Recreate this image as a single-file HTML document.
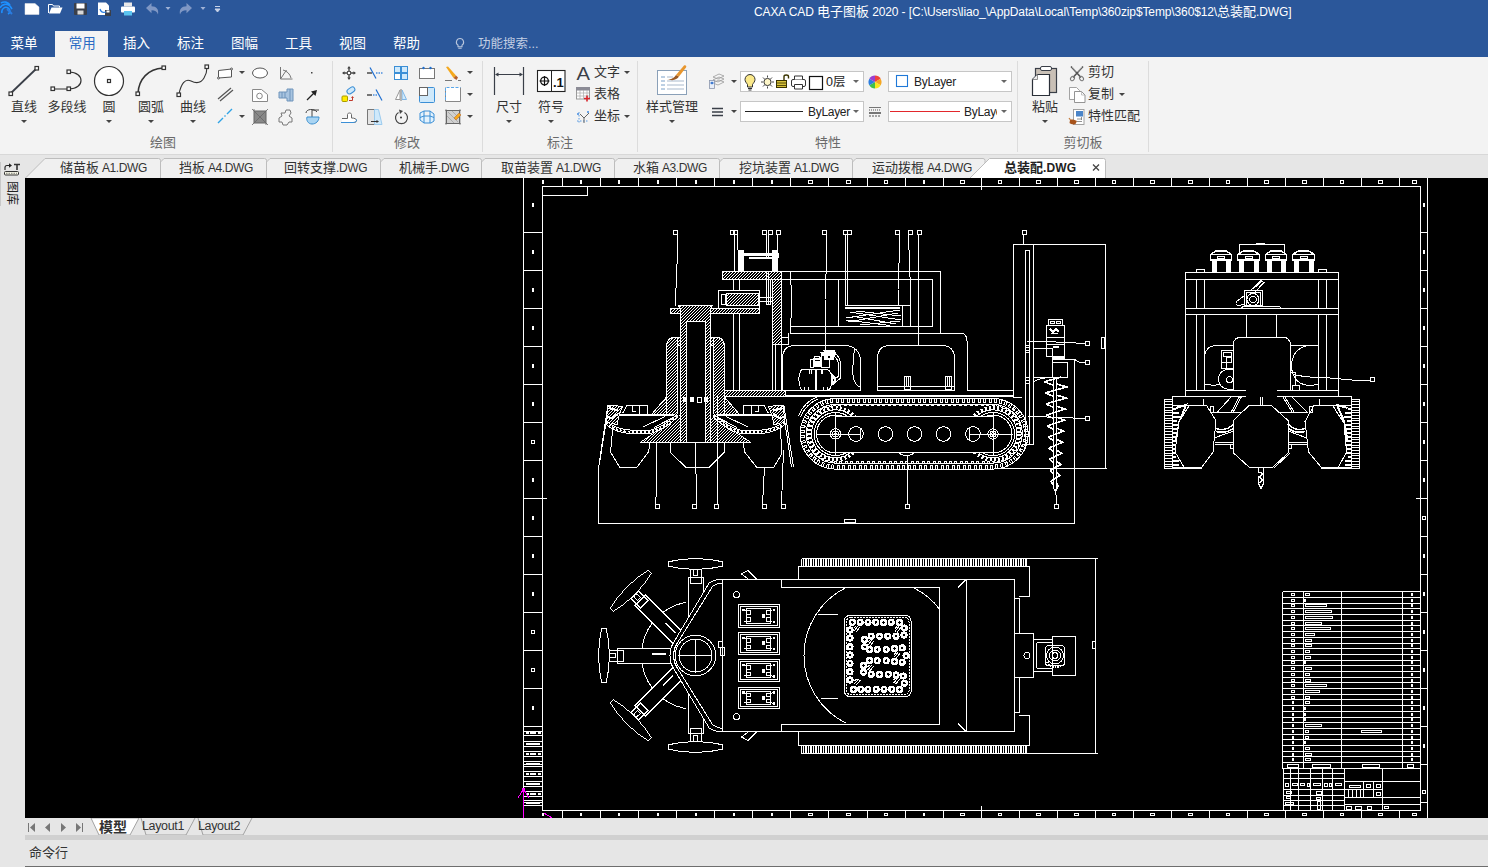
<!DOCTYPE html>
<html lang="zh"><head><meta charset="utf-8"><title>CAXA CAD</title>
<style>
*{box-sizing:border-box;margin:0;padding:0}
html,body{width:1488px;height:867px;overflow:hidden;background:#e6e6e6}
body{font-family:"Liberation Sans","Noto Sans CJK SC",sans-serif;font-size:13px;color:#333;position:relative}
.abs{position:absolute}
#title{left:0;top:0;width:1488px;height:57px;background:#2b579a}
#title .cap{position:absolute;left:754px;top:1px;color:#fff;font-size:12px;white-space:nowrap;letter-spacing:-0.12px}
.cj{font-size:13px;letter-spacing:0}
.rt{position:absolute;top:31px;height:26px;line-height:26px;color:#fff;font-size:13.5px;text-align:center;white-space:nowrap}
.rt.on{background:#f3f3f3;color:#2b6cc4}
#ribbon{left:0;top:57px;width:1488px;height:98px;background:#f3f3f3;border-bottom:1px solid #d8d8d8}
.sep{position:absolute;top:61px;width:1px;height:91px;background:#dcdcdc}
.gl{position:absolute;top:132px;font-size:13px;color:#6a6a6a;white-space:nowrap;transform:translateX(-50%)}
.bl{position:absolute;top:96px;font-size:13px;color:#333;white-space:nowrap;transform:translateX(-50%)}
.sl{position:absolute;font-size:13px;color:#333;white-space:nowrap}
.dd{position:absolute;width:0;height:0;border-left:3px solid transparent;border-right:3px solid transparent;border-top:3px solid #444}
#doctabs{left:0;top:156px;width:1488px;height:22px;background:#e6e6e6}
.dt{position:absolute;top:157.5px;font-size:12px;letter-spacing:-0.4px;color:#333;white-space:nowrap;line-height:19px}
#side{left:0;top:156px;width:25px;height:711px;background:#e6e6e6}
#canvas{left:25px;top:178px;width:1463px;height:640px;background:#000}
#bottom{left:25px;top:818px;width:1463px;height:49px;background:#e6e6e6}
.combo{position:absolute;height:21px;background:#fff;border:1px solid #c6c6c6}
</style></head><body>
<div id="title" class="abs"><div class="cap">CAXA CAD <span class="cj">电子图板</span> 2020 - [C:\Users\liao_\AppData\Local\Temp\360zip$Temp\360$12\<span class="cj">总装配</span>.DWG]</div></div>
<div class="rt" style="left:-3px;width:54px">菜单</div>
<div class="rt on" style="left:55px;width:53px;text-indent:1.5px">常用</div>
<div class="rt" style="left:109.5px;width:54px">插入</div>
<div class="rt" style="left:163.5px;width:54px">标注</div>
<div class="rt" style="left:217.5px;width:54px">图幅</div>
<div class="rt" style="left:271.5px;width:54px">工具</div>
<div class="rt" style="left:325.5px;width:54px">视图</div>
<div class="rt" style="left:379.5px;width:54px">帮助</div>
<svg class="abs" style="left:453px;top:36px" width="14" height="16" viewBox="0 0 14 16"><path d="M7 2.5a3.6 3.6 0 0 0-2 6.6v1.6h4V9.1a3.6 3.6 0 0 0-2-6.6z M5.3 12.3h3.4" fill="none" stroke="#b9c6dd" stroke-width="1.1"/></svg>
<div class="abs" style="left:478px;top:33px;font-size:12.5px;color:#c3cfe3;white-space:nowrap">功能搜索...</div>
<!--RIBBONTABS-->
<div id="ribbon" class="abs"></div>
<div class="sep" style="left:332px"></div><div class="sep" style="left:482px"></div><div class="sep" style="left:637px"></div><div class="sep" style="left:1017px"></div><div class="sep" style="left:1148px"></div>
<div class="bl" style="left:24px">直线</div><div class="bl" style="left:67px">多段线</div><div class="bl" style="left:109px">圆</div><div class="bl" style="left:151px">圆弧</div><div class="bl" style="left:193px">曲线</div>
<div class="bl" style="left:509px">尺寸</div><div class="bl" style="left:551px">符号</div><div class="bl" style="left:672px">样式管理</div><div class="bl" style="left:1045px">粘贴</div>
<div class="gl" style="left:163px">绘图</div><div class="gl" style="left:407px">修改</div><div class="gl" style="left:560px">标注</div><div class="gl" style="left:828px">特性</div><div class="gl" style="left:1083px">剪切板</div>
<div class="sl" style="left:594px;top:61px">文字</div><div class="sl" style="left:594px;top:83px">表格</div><div class="sl" style="left:594px;top:105px">坐标</div>
<div class="sl" style="left:1088px;top:61px">剪切</div><div class="sl" style="left:1088px;top:83px">复制</div><div class="sl" style="left:1088px;top:105px">特性匹配</div>
<div class="dd" style="left:21px;top:120px"></div><div class="dd" style="left:106px;top:120px"></div><div class="dd" style="left:148px;top:120px"></div><div class="dd" style="left:190px;top:120px"></div>
<div class="dd" style="left:506px;top:120px"></div><div class="dd" style="left:548px;top:120px"></div><div class="dd" style="left:669px;top:120px"></div><div class="dd" style="left:1042px;top:120px"></div>
<div class="dd" style="left:239px;top:71px"></div><div class="dd" style="left:239px;top:115px"></div>
<div class="dd" style="left:467px;top:71px"></div><div class="dd" style="left:467px;top:93px"></div><div class="dd" style="left:467px;top:115px"></div>
<div class="dd" style="left:624px;top:71px"></div><div class="dd" style="left:624px;top:115px"></div>
<div class="dd" style="left:731px;top:80px"></div><div class="dd" style="left:731px;top:110px"></div>
<div class="dd" style="left:1119px;top:93px"></div>
<div class="combo" style="left:740px;top:71px;width:124px"></div>
<div class="combo" style="left:888px;top:71px;width:124px"></div>
<div class="combo" style="left:740px;top:101px;width:124px"></div>
<div class="combo" style="left:888px;top:101px;width:124px"></div>
<div class="sl" style="left:826px;top:71px;font-size:12.5px;color:#222">0层</div>
<div class="sl" style="left:914px;top:75px;font-size:12px;letter-spacing:-0.3px;color:#222">ByLayer</div>
<div class="sl" style="left:808px;top:104.5px;font-size:12px;letter-spacing:-0.3px;color:#222">ByLayer</div>
<div class="sl" style="left:964px;top:104.5px;font-size:12px;letter-spacing:-0.3px;color:#222;width:33px;overflow:hidden">ByLayer</div>
<div class="dd" style="left:853px;top:80px;border-top-color:#666"></div><div class="dd" style="left:1001px;top:80px;border-top-color:#666"></div>
<div class="dd" style="left:853px;top:110px;border-top-color:#666"></div><div class="dd" style="left:1001px;top:110px;border-top-color:#666"></div>
<svg class="abs" style="left:0;top:0" width="1488" height="157" viewBox="0 0 1488 157" fill="none" stroke-linecap="butt">
<!-- quick access -->
<g>
<path d="M1 3c3-2 7-1 9 2M0 8c2-4 7-5 10-2l2 3M2 13c-1-4 3-7 6-5s2 5 0 6" stroke="#1e90ff" stroke-width="1.6"/>
<path d="M7 9l5 5" stroke="#2a7de1" stroke-width="2"/>
<path d="M25 3.5h10l4 3.5v7.5h-14z" fill="#fff" stroke="#e6e6e6" stroke-width="0.5"/>
<path d="M49 13.5l2.5-6h11l-2.5 6z" fill="#fff"/><path d="M48.500 13V4.500h4l1 1.500h6v1.500" stroke="#fff" stroke-width="1"/>
<rect x="74" y="3" width="13" height="12" rx="1" fill="#3a3f4a"/><rect x="76.500" y="3.500" width="8" height="5" fill="#fff"/><rect x="77.500" y="10.500" width="6" height="4" fill="#d8d8d8"/>
<path d="M98 2.500h8l3 3V15h-11z" fill="#fff"/><rect x="105" y="10" width="6" height="6" fill="#3a3f4a"/><rect x="106.500" y="10.500" width="3" height="2" fill="#fff"/><path d="M100 9c1 3 3 4 6 3" stroke="#2a7de1" stroke-width="1.300"/>
<rect x="121" y="6.500" width="14" height="6" rx="1" fill="#fff"/><rect x="124" y="2.500" width="8" height="4" fill="#e8e8e8"/><rect x="124" y="11" width="8" height="4.500" fill="#5bc4f0"/>
<path d="M146 8l5.500-5v3.200c5 0 7.500 3 6.500 8.300c-1-3-3-4.300-6.500-4.300v3z" fill="#7f97c4"/>
<path d="M192 8l-5.500-5v3.200c-5 0-7.500 3-6.500 8.300c1-3 3-4.300 6.500-4.300v3z" fill="#7f97c4"/>
<path d="M165.500 7h5l-2.500 3zM200.500 7h5l-2.500 3z" fill="#9fb2d6"/>
<path d="M215 6.500h5M215 9h5l-2.500 3z" stroke="#c8d3e8" stroke-width="1" fill="#c8d3e8"/>
</g>
<!-- big draw icons -->
<g stroke="#333" stroke-width="1.200">
<path d="M11 93L36 69" stroke-width="1.800" stroke="#3a3f48"/>
<rect x="9" y="92" width="3.500" height="3.500" fill="#fff"/><rect x="35" y="66.500" width="3.500" height="3.500" fill="#fff"/>
<path d="M53 89h16M69 72c16 0 16 17 0 17"/>
<rect x="51" y="87" width="3.500" height="3.500" fill="#fff"/><rect x="67" y="87" width="3.500" height="3.500" fill="#fff"/><rect x="67" y="70" width="3.500" height="3.500" fill="#fff"/>
<circle cx="109" cy="81" r="14.500" fill="#fff"/><rect x="107.500" y="79.500" width="3" height="3" fill="#fff"/>
<path d="M138 93c1-14 10-24 25-25" stroke-width="1.500"/>
<rect x="136" y="92" width="3.500" height="3.500" fill="#fff"/><rect x="162" y="66" width="3.500" height="3.500" fill="#fff"/>
<path d="M179 94c2-10 6-16 12-13s10 2 13-3s3-8 3-11" stroke-width="1.100"/>
<rect x="177" y="93" width="3.500" height="3.500" fill="#fff"/><rect x="205" y="65" width="3.500" height="3.500" fill="#fff"/>
</g>
<!-- small draw icons -->
<g stroke="#555" stroke-width="1">
<path d="M218.500 70.500l13-1.500v8l-13 1z" fill="#fff"/><circle cx="218.500" cy="78" r="1" fill="#fff"/><circle cx="231.500" cy="69" r="1" fill="#fff"/>
<path d="M218 99l13-11M220 101l13-11" stroke="#555" stroke-width="1.200"/>
<path d="M218 123l5-5m1.500-1.500l1-1m1.500-1.500l5-5" stroke="#2ea3e6" stroke-width="1.400"/>
<ellipse cx="260" cy="73" rx="7.500" ry="5" fill="#fff"/>
<path d="M252.500 89.500h9l6 5v7h-15z" fill="#fff" stroke="#888"/><circle cx="259.500" cy="96" r="2.800" stroke="#888"/>
<rect x="254" y="111" width="12" height="12" fill="#888" stroke="#666"/><path d="M252 109l16 16M268 109l-16 16M254 111v-2M266 123v2" stroke="#666" stroke-width="0.800"/>
<path d="M280.500 67v12h12M280.500 79l6-9M283 70c4 1 7 4 8 8" stroke="#777"/>
<path d="M279 92h8v-3h6v12h-6v-3h-8z" fill="#a8c4e0" stroke="#6f94bb"/><path d="M282 92v6M285 92v6M290 89v12" stroke="#6f94bb"/>
<path d="M281 113h4l1-3h4l1 3-2 3 3 2v4h-3l-2 3h-4l-1-3h-3v-4l3-2z" stroke="#777" fill="#f3f3f3"/>
<rect x="311" y="72" width="1.500" height="1.500" fill="#444" stroke="none"/>
<path d="M307 100l8-8" stroke="#222" stroke-width="1.200"/><path d="M317 90l-1.500 6-4.500-4.500z" fill="#222" stroke="none"/>
<path d="M306 113c0-4 8-5 11-1M312 117v-7h7" stroke="#444"/><path d="M312 117h7c0 4-3 7-7 7s-6-4-5-7z" fill="#a9d4f2" stroke="#3b8fcf"/>
</g>
</svg>
<svg class="abs" style="left:0;top:0" width="1488" height="157" viewBox="0 0 1488 157" fill="none">
<!-- modify group -->
<g stroke-width="1">
<rect x="347.500" y="71.500" width="3" height="3" fill="#fff" stroke="#555"/><path d="M343 73h4M351 73h4M349 67v4M349 75v4" stroke="#444" stroke-width="1.400"/><path d="M342 73l2.500-1.800v3.600zM356 73l-2.500-1.800v3.600zM349 66l-1.800 2.500h3.600zM349 80l-1.800-2.500h3.600z" fill="#444"/>
<path d="M367 73h5" stroke="#555" stroke-width="1.600"/><path d="M376 73h7" stroke="#4b8fe0" stroke-width="1.400" stroke-dasharray="1.500 1"/><path d="M370 67.500l6 11" stroke="#1f6fd0" stroke-width="1.200"/>
<rect x="394.500" y="66.500" width="6" height="6" fill="#cfe9fb" stroke="#3b8fd6"/><rect x="401.500" y="66.500" width="6" height="6" fill="#cfe9fb" stroke="#3b8fd6"/><rect x="394.500" y="73.500" width="6" height="6" fill="#fff" stroke="#3b8fd6"/><rect x="401.500" y="73.500" width="6" height="6" fill="#cfe9fb" stroke="#3b8fd6"/>
<path d="M422 68.500h-2.500v10h15v-10h-2M425 68.500h4" stroke="#777" fill="#fff"/><rect x="419.500" y="68.500" width="15" height="10" fill="#fff" stroke="#777"/><circle cx="423.500" cy="68" r="1.200" fill="#1f6fd0"/><circle cx="430.500" cy="68" r="1.200" fill="#1f6fd0"/>
<path d="M446 67l2-0.500 8 9-2.500 2.500z" fill="#f5a81c"/><path d="M453.500 78l2.500-2.500 2 2-1.500 2.500z" fill="#b5602a"/><path d="M445 80.500h7M458 80.500h3" stroke="#777"/>
<rect x="342" y="96" width="5.500" height="5.500" rx="1" fill="#ffeb00" stroke="#a89a00"/><rect x="347" y="88" width="8.500" height="5" rx="2.500" transform="rotate(-35 351 91)" fill="#cfe9fb" stroke="#3b8fd6"/><path d="M349 100.500h3.500v-3" stroke="#c0392b"/><path d="M352.500 96l-1.500 2h3z" fill="#c0392b"/>
<path d="M367 95h5" stroke="#555" stroke-width="1.600"/><path d="M373 95h4" stroke="#4b8fe0" stroke-width="1.400" stroke-dasharray="1.500 1"/><path d="M376 89.500l6 11" stroke="#1f6fd0" stroke-width="1.200"/>
<path d="M400 90l-4.500 9.500h4.500z" fill="#fff" stroke="#999"/><path d="M402 90l4.500 9.500h-4.500z" fill="#cfe9fb" stroke="#7fb6e6"/><path d="M401 89v12" stroke="#aaa" stroke-width="1.600"/>
<rect x="419.500" y="87.500" width="15" height="15" rx="1" fill="#cfe9fb" stroke="#3b8fd6"/><rect x="419.500" y="87.500" width="8" height="8" fill="#fff" stroke="#666"/>
<path d="M445.500 87.500v14h15v-14" stroke="#888" fill="#fff"/><path d="M445.500 100v-12.500h15" stroke="#5aa7ea" stroke-dasharray="3 1.500"/>
<path d="M342 118.500h5.500v-4c0-2 4-2 4 0v3.500c3 0 5 1 5 2.500s-1.500 2-3 2H342" stroke="#666" fill="#fff"/><path d="M341 122.500h12c2 0 4-1 3.500-3" stroke="#3b8fd6"/>
<path d="M367.500 109.500h7v15h-7z" fill="#e4e4e4" stroke="#777"/><path d="M374.500 109.500h4l3.500 15h-7.500z" fill="#cfe9fb" stroke="#9ccbee"/><path d="M371 121.500h6" stroke="#333"/><path d="M379 121.500l-2.500-1.500v3z" fill="#333"/>
<path d="M404.500 112.500a6 6 0 1 1-6 0" stroke="#444" stroke-width="1.200"/><path d="M399 109.500l4 1.500-3 3z" fill="#444"/><circle cx="401" cy="117.500" r="1" fill="#333"/>
<path d="M420 113l4-2h6l4 3v7l-3 2h-7l-4-3z M424 111v5h6v-5M424 116l-4 1.500M430 116l4 1.500M424 116v7M430 116v7" stroke="#3b8fd6" fill="#e3f2fd"/>
<rect x="446.500" y="110.500" width="13" height="13" fill="#d0d0d0" stroke="#666"/><path d="M446 109v16M460 109v16M445 110.500h16M445 123.500h16" stroke="#666" stroke-width="0.600"/><path d="M448 112l10 10M452 111l7 7M447 116l7 7" stroke="#999" stroke-width="0.700"/><path d="M454 118l5-5 2 2-5 5z" fill="#f5a81c" stroke="#b5602a" stroke-width="0.500"/>
</g>
</svg>
<svg class="abs" style="left:0;top:0" width="1488" height="157" viewBox="0 0 1488 157" fill="none">
<!-- annotate -->
<path d="M494.500 67v28M523.500 67v28M496 74.500h26" stroke="#3a3f48" stroke-width="1.200"/><path d="M495 74.500l3.500-2v4zM523 74.500l-3.500-2v4z" fill="#3a3f48"/>
<rect x="537.500" y="70.500" width="27.500" height="21" fill="#fff" stroke="#222" stroke-width="1.100"/><path d="M551.500 70.500v21" stroke="#222"/><circle cx="544.500" cy="81" r="3.800" stroke="#111" stroke-width="1.300"/><path d="M539.500 81h10M544.500 76v10" stroke="#111" stroke-width="1.200"/>
<text x="553" y="86.500" font-family="Liberation Sans,sans-serif" font-weight="bold" font-size="13" fill="#111">.1</text>
<text x="576.500" y="79.500" font-family="Liberation Sans,sans-serif" font-size="19" fill="#3a3f48" textLength="13.500" lengthAdjust="spacingAndGlyphs">A</text>
<rect x="576.500" y="87.500" width="13" height="11.500" fill="#fff" stroke="#999"/><rect x="576.500" y="87.500" width="13" height="2.500" fill="#8c8c96" stroke="#8c8c96"/><path d="M576.500 93h13M576.500 96h13M580 90v9M583.500 90v9M587 90v9" stroke="#aaa" stroke-width="0.700"/><path d="M584 98.500h6M587 95.500v6" stroke="#d8232a" stroke-width="1.600"/>
<path d="M579 112v11M577 121h12" stroke="#5a9ae0" stroke-width="1" stroke-dasharray="1.500 1.500"/><path d="M584 123v-5l5-5M584 118l-4-4" stroke="#666" stroke-width="1"/><path d="M577 113l2 2M579 113l-2 2M587 111l2 2M589 111l-2 2" stroke="#4b8fe0" stroke-width="0.800"/>
<!-- style manager -->
<rect x="657.500" y="70.500" width="29" height="24" fill="#fff" stroke="#8aa0b8"/><path d="M661 77h4M661 81h4M661 85h4M661 89h4" stroke="#7aa0c8" stroke-width="1"/><path d="M667 77h6M667 81h17M667 85h17M667 89h17" stroke="#a9b9cc" stroke-width="1"/>
<path d="M667 79c4 1 7-1 9-4l3 1.500c-2 3-6 5-12 2.500z" fill="#9a5a24"/><path d="M676 75l8-9.500c1.500-1 3 0.500 2 2l-7 9z" fill="#e8962e"/>
<!-- layer icons -->
<path d="M713 77l6-3 5 2-6 3zM713 80l6-3 5 2-6 3zM713 83l6-3 5 2-6 3z" fill="#f6f6f6" stroke="#999" stroke-width="0.800"/><rect x="709.500" y="80.500" width="5" height="8" fill="#e8eef8" stroke="#8a96ac" stroke-width="0.800"/><path d="M710 83l2 1.500 2-1.500-2-1.500z" fill="#3b78d0"/>
<path d="M712 108.500h11M712 112h11M712 115.500h11" stroke="#3a3f48" stroke-width="1.300"/>
<!-- combo1 contents -->
<path d="M750 74.500c-3 0-5 2.500-5 5 0 2 1.500 3.500 2.500 5v2.500h5v-2.500c1-1.500 2.500-3 2.500-5 0-2.500-2-5-5-5z" fill="#fbe98a" stroke="#333" stroke-width="1"/><path d="M748 88.500h4M748.500 90h3" stroke="#333" stroke-width="1"/>
<circle cx="767.500" cy="82" r="3.600" fill="#fdf6c8" stroke="#333" stroke-width="1"/><path d="M767.500 75.500v2M767.500 86.500v2M761 82h2M772 82h2M763 77.500l1.500 1.500M770.500 85l1.500 1.500M772 77.500l-1.500 1.500M764.500 85l-1.500 1.500" stroke="#333" stroke-width="0.900"/>
<rect x="776.500" y="80.500" width="10" height="7" fill="#d8c23a" stroke="#3a3400" stroke-width="1"/><path d="M777 83h9M777 85.500h9" stroke="#3a3400" stroke-width="0.800"/><path d="M784 80v-3.500c0-2 4.500-2 4.500 0v2" stroke="#3a3400" stroke-width="1.400"/>
<rect x="791.500" y="79.500" width="14" height="7" rx="1.500" fill="#fff" stroke="#333" stroke-width="1"/><path d="M794.500 79.500v-3.500h8v3.500M794.500 84.500v4.500h8v-4.500z" fill="#fff" stroke="#333" stroke-width="1"/>
<rect x="809.500" y="76.500" width="13" height="13" fill="#fff" stroke="#111" stroke-width="1.200"/>
<!-- colour wheel -->
<g transform="translate(875 82)"><path d="M0 0L0-6.500A6.500 6.500 0 0 1 5.630-3.250z" fill="#f0443a"/><path d="M0 0L5.630-3.250A6.500 6.500 0 0 1 5.630 3.250z" fill="#f5a623"/><path d="M0 0L5.630 3.250A6.500 6.500 0 0 1 0 6.500z" fill="#f8e71c"/><path d="M0 0L0 6.500A6.500 6.500 0 0 1-5.630 3.250z" fill="#3fc04a"/><path d="M0 0L-5.630 3.250A6.500 6.500 0 0 1-5.630-3.250z" fill="#2b7de0"/><path d="M0 0L-5.630-3.250A6.500 6.500 0 0 1 0-6.500z" fill="#9b3fd0"/></g>
<rect x="896.500" y="75.500" width="11" height="11" fill="#fff" stroke="#1f78d8" stroke-width="1.100"/>
<path d="M745 111.500h58" stroke="#222" stroke-width="1"/>
<path d="M869 107.500h12" stroke="#555" stroke-width="0.800"/><path d="M869 110h12" stroke="#555" stroke-width="1.200" stroke-dasharray="1 1"/><path d="M869 113h12" stroke="#555" stroke-width="1.600"/><path d="M869 116h12" stroke="#555" stroke-width="1" stroke-dasharray="2 1"/>
<path d="M890 111.500h70" stroke="#e3272b" stroke-width="1.100"/>
<!-- clipboard -->
<rect x="1035.500" y="68.500" width="21" height="24" fill="#c9c0b6" stroke="#3a3f48" stroke-width="1.200"/><rect x="1040.500" y="66.500" width="11" height="4" rx="1.500" fill="#fff" stroke="#3a3f48" stroke-width="1"/>
<path d="M1032.500 79.500l5-5h12v21h-17z" fill="#fff" stroke="#2a2f38" stroke-width="1.200"/><path d="M1032.500 79.500h5v-5" stroke="#777" stroke-width="0.800" fill="#eee"/>
<path d="M1071 66.500l10 11M1083 66.500l-10 11" stroke="#555" stroke-width="1.600"/><path d="M1072 67l4.500 5M1082 67l-4.500 5" stroke="#ddd" stroke-width="0.600"/><ellipse cx="1072.500" cy="78.500" rx="1.800" ry="2.300" stroke="#777" transform="rotate(40 1072.500 78.500)"/><ellipse cx="1081.500" cy="78.500" rx="1.800" ry="2.300" stroke="#777" transform="rotate(-40 1081.500 78.500)"/>
<path d="M1069.500 87.500h7l3 3v9h-10z" fill="#fff" stroke="#999" stroke-width="0.900"/><path d="M1074.500 91.500h7l3.500 3.500v7.500h-10.500z" fill="#fff" stroke="#888" stroke-width="0.900"/><path d="M1081.500 91.500v3.500h3.500" stroke="#aaa" stroke-width="0.700"/>
<rect x="1073.500" y="109.500" width="10.500" height="15" fill="#fff" stroke="#999" stroke-width="0.900"/><rect x="1076" y="111" width="7" height="5.500" fill="#4a84c8"/><path d="M1077 119h5M1077 121.500h5M1081.500 117v3" stroke="#666" stroke-width="0.700"/>
<path d="M1070 120c2-1 5 0 7 1l-1.500 3c-2 1-5 0-6-1z" fill="#a8541c"/><path d="M1070.500 120l-1.500-2" stroke="#c47a3a" stroke-width="1.200"/>
</svg>
<!--RIBBON-->
<div id="doctabs" class="abs"></div>
<svg class="abs" style="left:0;top:156px" width="1488" height="23" viewBox="0 156 1488 23" fill="none">
<path d="M25 178.500L45 158.500H158.500Q160.500 158.500 160.500 160.500V178.500z" fill="#f0f0f0" stroke="#bdbdbd"/>
<path d="M160.500 178.500V162l3.500-3.500H264.500Q266.500 158.500 266.500 160.500V178.500z" fill="#f0f0f0" stroke="#bdbdbd"/>
<path d="M266.500 178.500V162l3.500-3.500H378.500Q380.500 158.500 380.500 160.500V178.500z" fill="#f0f0f0" stroke="#bdbdbd"/>
<path d="M380.500 178.500V162l3.500-3.500H479.500Q481.500 158.500 481.500 160.500V178.500z" fill="#f0f0f0" stroke="#bdbdbd"/>
<path d="M481.500 178.500V162l3.500-3.500H612.500Q614.500 158.500 614.500 160.500V178.500z" fill="#f0f0f0" stroke="#bdbdbd"/>
<path d="M614.500 178.500V162l3.500-3.500H717.500Q719.500 158.500 719.500 160.500V178.500z" fill="#f0f0f0" stroke="#bdbdbd"/>
<path d="M719.500 178.500V162l3.500-3.500H850.500Q852.500 158.500 852.500 160.500V178.500z" fill="#f0f0f0" stroke="#bdbdbd"/>
<path d="M852.500 178.500V162l3.500-3.500H983Q985 158.500 985 160.500V178.500z" fill="#f0f0f0" stroke="#bdbdbd"/>
<path d="M969 179L989.500 158.500H1103.500Q1105.500 158.500 1105.500 160.500V179z" fill="#fff" stroke="#bdbdbd"/>
<path d="M1093 164.500l6 6M1099 164.500l-6 6" stroke="#444" stroke-width="1.300"/>
</svg>
<div class="dt" style="left:60px"><span class="cj">储苗板</span> A1.DWG</div>
<div class="dt" style="left:179px"><span class="cj">挡板</span> A4.DWG</div>
<div class="dt" style="left:284px"><span class="cj">回转支撑</span>.DWG</div>
<div class="dt" style="left:399px"><span class="cj">机械手</span>.DWG</div>
<div class="dt" style="left:501px"><span class="cj">取苗装置</span> A1.DWG</div>
<div class="dt" style="left:633px"><span class="cj">水箱</span> A3.DWG</div>
<div class="dt" style="left:739px"><span class="cj">挖坑装置</span> A1.DWG</div>
<div class="dt" style="left:872px"><span class="cj">运动拨棍</span> A4.DWG</div>
<div class="dt" style="left:1004px;font-weight:bold;color:#222;letter-spacing:0.1px"><span class="cj">总装配</span>.DWG</div>
<!--DOCTABS-->
<div id="side" class="abs"></div>
<div id="canvas" class="abs"></div>
<svg class="abs" style="left:25px;top:178px" width="1463" height="640" viewBox="25 178 1463 640" fill="none" stroke="#fff" stroke-width="1" shape-rendering="crispEdges">
<defs><pattern id="h" width="3" height="3" patternUnits="userSpaceOnUse"><path d="M0 2h1v1h-1zM1 1h1v1h-1zM2 0h1v1h-1z" fill="#fff" stroke="none"/></pattern></defs>
<path d="M523.5 178V818 M1427.5 178V818 M542.5 186.500V810.500H1420.500V186.500z M542.5 195.500H587.500V186.500 M562.5 178V186.500 M562.5 810.500V818 M600.5 178V186.500 M600.5 810.500V818 M638.5 178V186.500 M638.5 810.500V818 M676.5 178V186.500 M676.5 810.500V818 M714.5 178V186.500 M714.5 810.500V818 M752.5 178V186.500 M752.5 810.500V818 M790.5 178V186.500 M790.5 810.500V818 M828.5 178V186.500 M828.5 810.500V818 M867 178V186.500 M867 810.500V818 M905 178V186.500 M905 810.500V818 M943 178V186.500 M943 810.500V818 M981 178V186.500 M981 810.500V818 M1019 178V186.500 M1019 810.500V818 M1057 178V186.500 M1057 810.500V818 M1095 178V186.500 M1095 810.500V818 M1133 178V186.500 M1133 810.500V818 M1171 178V186.500 M1171 810.500V818 M1209 178V186.500 M1209 810.500V818 M1247.5 178V186.500 M1247.5 810.500V818 M1285.5 178V186.500 M1285.5 810.500V818 M1323.5 178V186.500 M1323.5 810.500V818 M1361.5 178V186.500 M1361.5 810.500V818 M1399.5 178V186.500 M1399.5 810.500V818 M523.5 232.5H542.500 M1420.5 232.5H1427.500 M523.5 270.5H542.500 M1420.5 270.5H1427.500 M523.5 308.5H542.500 M1420.5 308.5H1427.500 M523.5 346.5H542.500 M1420.5 346.5H1427.500 M523.5 384.5H542.500 M1420.5 384.5H1427.500 M523.5 422.5H542.500 M1420.5 422.5H1427.500 M523.5 460.5H542.500 M1420.5 460.5H1427.500 M523.5 498.5H542.500 M1420.5 498.5H1427.500 M523.5 536.5H542.500 M1420.5 536.5H1427.500 M523.5 574.5H542.500 M1420.5 574.5H1427.500 M523.5 612.5H542.500 M1420.5 612.5H1427.500 M523.5 650.5H542.500 M1420.5 650.5H1427.500 M523.5 688.5H542.500 M1420.5 688.5H1427.500 M523.5 726.5H542.500 M1420.5 726.5H1427.500 M523.5 764.5H542.500 M1420.5 764.5H1427.500 M523.5 802.5H542.500 M1420.5 802.5H1427.500 M981.5 178V190 M981.5 806V818 M523.5 498.500H547 M1416 498.500H1427.500"/>
<rect x="542" y="180" width="2" height="4" fill="#fff" stroke="none"/>
<rect x="542" y="813" width="2" height="3" fill="#fff" stroke="none"/>
<rect x="580" y="180" width="2" height="4" fill="#fff" stroke="none"/>
<rect x="580" y="813" width="2" height="3" fill="#fff" stroke="none"/>
<rect x="618" y="180" width="2" height="4" fill="#fff" stroke="none"/>
<rect x="618" y="813" width="2" height="3" fill="#fff" stroke="none"/>
<rect x="657" y="180" width="2" height="4" fill="#fff" stroke="none"/>
<rect x="657" y="813" width="2" height="3" fill="#fff" stroke="none"/>
<rect x="695" y="180" width="2" height="4" fill="#fff" stroke="none"/>
<rect x="695" y="813" width="2" height="3" fill="#fff" stroke="none"/>
<rect x="733" y="180" width="2" height="4" fill="#fff" stroke="none"/>
<rect x="733" y="813" width="2" height="3" fill="#fff" stroke="none"/>
<rect x="771" y="180" width="2" height="4" fill="#fff" stroke="none"/>
<rect x="771" y="813" width="2" height="3" fill="#fff" stroke="none"/>
<rect x="808.5" y="180.5" width="4" height="3" />
<rect x="808.5" y="813.5" width="4" height="2" />
<rect x="846.5" y="180.5" width="4" height="3" />
<rect x="846.5" y="813.5" width="4" height="2" />
<rect x="884.5" y="180.5" width="3" height="3" />
<rect x="884.5" y="813.5" width="3" height="2" />
<rect x="923" y="180" width="2" height="4" fill="#fff" stroke="none"/>
<rect x="923" y="813" width="2" height="3" fill="#fff" stroke="none"/>
<rect x="960.5" y="180.5" width="4" height="3" />
<rect x="960.5" y="813.5" width="4" height="2" />
<rect x="998.5" y="180.5" width="3" height="3" />
<rect x="998.5" y="813.5" width="3" height="2" />
<rect x="1036.5" y="180.5" width="4" height="3" />
<rect x="1036.5" y="813.5" width="4" height="2" />
<rect x="1074.5" y="180.5" width="4" height="3" />
<rect x="1074.5" y="813.5" width="4" height="2" />
<rect x="1112.5" y="180.5" width="3" height="3" />
<rect x="1112.5" y="813.5" width="3" height="2" />
<rect x="1150.5" y="180.5" width="4" height="3" />
<rect x="1150.5" y="813.5" width="4" height="2" />
<rect x="1188.5" y="180.5" width="4" height="3" />
<rect x="1188.5" y="813.5" width="4" height="2" />
<rect x="1226.5" y="180.5" width="3" height="3" />
<rect x="1226.5" y="813.5" width="3" height="2" />
<rect x="1264.5" y="180.5" width="4" height="3" />
<rect x="1264.5" y="813.5" width="4" height="2" />
<rect x="1302.5" y="180.5" width="4" height="3" />
<rect x="1302.5" y="813.5" width="4" height="2" />
<rect x="1340.5" y="180.5" width="3" height="3" />
<rect x="1340.5" y="813.5" width="3" height="2" />
<rect x="1378.5" y="180.5" width="4" height="3" />
<rect x="1378.5" y="813.5" width="4" height="2" />
<rect x="1412.5" y="180.5" width="4" height="3" />
<rect x="1412.5" y="813.5" width="4" height="2" />
<rect x="532" y="203" width="2" height="4" fill="#fff" stroke="none"/>
<rect x="1423" y="203" width="2" height="4" fill="#fff" stroke="none"/>
<rect x="532" y="250" width="2" height="4" fill="#fff" stroke="none"/>
<rect x="1423" y="250" width="2" height="4" fill="#fff" stroke="none"/>
<rect x="532" y="288" width="2" height="4" fill="#fff" stroke="none"/>
<rect x="1423" y="288" width="2" height="4" fill="#fff" stroke="none"/>
<rect x="532" y="326" width="2" height="4" fill="#fff" stroke="none"/>
<rect x="1423" y="326" width="2" height="4" fill="#fff" stroke="none"/>
<rect x="532" y="364" width="2" height="4" fill="#fff" stroke="none"/>
<rect x="1423" y="364" width="2" height="4" fill="#fff" stroke="none"/>
<rect x="532" y="402" width="2" height="4" fill="#fff" stroke="none"/>
<rect x="1423" y="402" width="2" height="4" fill="#fff" stroke="none"/>
<rect x="531.5" y="440.5" width="3" height="3"/>
<rect x="1423" y="440" width="2" height="4" fill="#fff" stroke="none"/>
<rect x="532" y="478" width="2" height="4" fill="#fff" stroke="none"/>
<rect x="1423" y="478" width="2" height="4" fill="#fff" stroke="none"/>
<rect x="532" y="516" width="2" height="4" fill="#fff" stroke="none"/>
<rect x="1422.5" y="516.5" width="3" height="3"/>
<rect x="532" y="554" width="2" height="4" fill="#fff" stroke="none"/>
<rect x="1423" y="554" width="2" height="4" fill="#fff" stroke="none"/>
<rect x="532" y="592" width="2" height="4" fill="#fff" stroke="none"/>
<rect x="1423" y="592" width="2" height="4" fill="#fff" stroke="none"/>
<rect x="531.5" y="630.5" width="3" height="3"/>
<rect x="1423" y="630" width="2" height="4" fill="#fff" stroke="none"/>
<rect x="531.5" y="668.5" width="3" height="3"/>
<rect x="1423" y="668" width="2" height="4" fill="#fff" stroke="none"/>
<rect x="532" y="706" width="2" height="4" fill="#fff" stroke="none"/>
<rect x="1423" y="706" width="2" height="4" fill="#fff" stroke="none"/>
<rect x="1423" y="744" width="2" height="4" fill="#fff" stroke="none"/>
<rect x="1422.5" y="790.5" width="3" height="3"/>
<path d="M523.5 726H542.500 M523.5 731H542.500 M523.5 735.5H542.500 M523.5 741H542.500 M523.5 746H542.500 M523.5 751.5H542.500 M523.5 756H542.500 M523.5 761H542.500 M523.5 766H542.500 M523.5 771H542.500 M523.5 776H542.500 M523.5 781H542.500 M523.5 786H542.500 M523.5 791H542.500 M523.5 796H542.500 M523.5 800.5H542.500 M523.5 805H542.500"/>
<rect x="525.5" y="732" width="3" height="2" fill="#fff" stroke="none"/><rect x="530" y="732" width="6" height="2" fill="#fff" stroke="none"/><rect x="538" y="732" width="3" height="2" fill="#fff" stroke="none"/>
<rect x="526" y="742.5" width="14" height="2" fill="#fff" stroke="none"/>
<rect x="525.5" y="753" width="3" height="2" fill="#fff" stroke="none"/><rect x="530" y="753" width="6" height="2" fill="#fff" stroke="none"/><rect x="538" y="753" width="3" height="2" fill="#fff" stroke="none"/>
<rect x="526" y="762.5" width="14" height="2" fill="#fff" stroke="none"/>
<rect x="525.5" y="772.5" width="3" height="2" fill="#fff" stroke="none"/><rect x="530" y="772.5" width="6" height="2" fill="#fff" stroke="none"/><rect x="538" y="772.5" width="3" height="2" fill="#fff" stroke="none"/>
<rect x="526" y="782.5" width="14" height="2" fill="#fff" stroke="none"/>
<rect x="525.5" y="792.5" width="3" height="2" fill="#fff" stroke="none"/><rect x="530" y="792.5" width="6" height="2" fill="#fff" stroke="none"/><rect x="538" y="792.5" width="3" height="2" fill="#fff" stroke="none"/>
<rect x="526" y="802" width="14" height="2" fill="#fff" stroke="none"/>
<path d="M523.5 789V818 M523.5 789L518 798 M523.5 789L529 798 M544 813L553 818.500" stroke="#ff00ff"/>
<rect x="522" y="788" width="3" height="3" fill="#ff00ff" stroke="none"/>
<path d="M1282.5 591.5H1420.500 M1282.5 597H1420.500 M1282.5 603H1420.500 M1282.5 608.5H1420.500 M1282.5 614.5H1420.500 M1282.5 620H1420.500 M1282.5 625.5H1420.500 M1282.5 631.5H1420.500 M1282.5 637H1420.500 M1282.5 643H1420.500 M1282.5 648.5H1420.500 M1282.5 654H1420.500 M1282.5 660H1420.500 M1282.5 665.5H1420.500 M1282.5 671.5H1420.500 M1282.5 677H1420.500 M1282.5 682.5H1420.500 M1282.5 688.5H1420.500 M1282.5 694H1420.500 M1282.5 699.5H1420.500 M1282.5 705.5H1420.500 M1282.5 711H1420.500 M1282.5 717H1420.500 M1282.5 722.5H1420.500 M1282.5 728H1420.500 M1282.5 734H1420.500 M1282.5 739.5H1420.500 M1282.5 745.5H1420.500 M1282.5 751H1420.500 M1282.5 756.5H1420.500 M1282.5 762.5H1420.500 M1282.5 591.500V768.500H1420.500 M1303.5 591.500V768.500 M1341.5 591.500V768.500 M1402.5 591.500V768.500"/>
<rect x="1291.5" y="593.5" width="3" height="2"/>
<rect x="1305.5" y="593.5" width="4" height="2"/>
<rect x="1410.5" y="593" width="2" height="3" fill="#fff" stroke="none"/>
<rect x="1291.5" y="599" width="3" height="2"/>
<rect x="1304" y="598.5" width="1.5" height="3" fill="#fff" stroke="none"/>
<rect x="1410.5" y="598.5" width="2" height="3" fill="#fff" stroke="none"/>
<rect x="1291.5" y="604.5" width="3" height="2"/>
<rect x="1305.5" y="604.5" width="21" height="2"/>
<rect x="1410.5" y="604" width="2" height="3" fill="#fff" stroke="none"/>
<rect x="1291.5" y="610.5" width="3" height="2"/>
<rect x="1305.5" y="610.5" width="26" height="2"/>
<rect x="1410.5" y="610" width="2" height="3" fill="#fff" stroke="none"/>
<rect x="1291.5" y="616" width="3" height="2"/>
<rect x="1305.5" y="616" width="27" height="2"/>
<rect x="1410.5" y="615.5" width="2" height="3" fill="#fff" stroke="none"/>
<rect x="1291.5" y="622" width="3" height="2"/>
<rect x="1305.5" y="622" width="16" height="2"/>
<rect x="1410.5" y="621.5" width="2" height="3" fill="#fff" stroke="none"/>
<rect x="1291.5" y="627.5" width="3" height="2"/>
<rect x="1305.5" y="627.5" width="25" height="2"/>
<rect x="1410.5" y="627" width="2" height="3" fill="#fff" stroke="none"/>
<rect x="1291.5" y="633" width="3" height="2"/>
<rect x="1305.5" y="633" width="9" height="2"/>
<rect x="1410.5" y="632.5" width="2" height="3" fill="#fff" stroke="none"/>
<rect x="1291.5" y="639" width="3" height="2"/>
<rect x="1305.5" y="639" width="6" height="2"/>
<rect x="1410.5" y="638.5" width="2" height="3" fill="#fff" stroke="none"/>
<rect x="1291.5" y="644.5" width="3" height="2"/>
<rect x="1305.5" y="644.5" width="6" height="2"/>
<rect x="1410.5" y="644" width="2" height="3" fill="#fff" stroke="none"/>
<rect x="1291.5" y="650.5" width="3" height="2"/>
<rect x="1305.5" y="650.5" width="4" height="2"/>
<rect x="1410.5" y="650" width="2" height="3" fill="#fff" stroke="none"/>
<rect x="1291.5" y="656" width="3" height="2"/>
<rect x="1305.5" y="656" width="5" height="2"/>
<rect x="1410.5" y="655.5" width="2" height="3" fill="#fff" stroke="none"/>
<rect x="1291.5" y="661.5" width="3" height="2"/>
<rect x="1304" y="661" width="1.5" height="3" fill="#fff" stroke="none"/>
<rect x="1410.5" y="661" width="2" height="3" fill="#fff" stroke="none"/>
<rect x="1291.5" y="667.5" width="3" height="2"/>
<rect x="1305.5" y="667.5" width="5.5" height="2"/>
<rect x="1410.5" y="667" width="2" height="3" fill="#fff" stroke="none"/>
<rect x="1291.5" y="673" width="3" height="2"/>
<rect x="1305.5" y="673" width="4" height="2"/>
<rect x="1410.5" y="672.5" width="2" height="3" fill="#fff" stroke="none"/>
<rect x="1291.5" y="679" width="3" height="2"/>
<rect x="1305.5" y="679" width="5" height="2"/>
<rect x="1410.5" y="678.5" width="2" height="3" fill="#fff" stroke="none"/>
<rect x="1291.5" y="684.5" width="3" height="2"/>
<rect x="1305.5" y="684.5" width="21" height="2"/>
<rect x="1410.5" y="684" width="2" height="3" fill="#fff" stroke="none"/>
<rect x="1291.5" y="690" width="3" height="2"/>
<rect x="1305.5" y="690" width="14" height="2"/>
<rect x="1410.5" y="689.5" width="2" height="3" fill="#fff" stroke="none"/>
<rect x="1291.5" y="696" width="3" height="2"/>
<rect x="1305.5" y="696" width="4" height="2"/>
<rect x="1410.5" y="695.5" width="2" height="3" fill="#fff" stroke="none"/>
<rect x="1292" y="701" width="2" height="3" fill="#fff" stroke="none"/>
<rect x="1305.5" y="701.5" width="4" height="2"/>
<rect x="1410.5" y="701" width="2" height="3" fill="#fff" stroke="none"/>
<rect x="1292" y="707" width="2" height="3" fill="#fff" stroke="none"/>
<rect x="1304" y="707" width="1.5" height="3" fill="#fff" stroke="none"/>
<rect x="1410.5" y="707" width="2" height="3" fill="#fff" stroke="none"/>
<rect x="1292" y="712.5" width="2" height="3" fill="#fff" stroke="none"/>
<rect x="1304" y="712.5" width="1.5" height="3" fill="#fff" stroke="none"/>
<rect x="1410.5" y="712.5" width="2" height="3" fill="#fff" stroke="none"/>
<rect x="1292" y="718" width="2" height="3" fill="#fff" stroke="none"/>
<rect x="1304" y="718" width="1.5" height="3" fill="#fff" stroke="none"/>
<rect x="1410.5" y="718" width="2" height="3" fill="#fff" stroke="none"/>
<rect x="1292" y="724" width="2" height="3" fill="#fff" stroke="none"/>
<rect x="1305.5" y="724.5" width="16" height="2"/>
<rect x="1410.5" y="724" width="2" height="3" fill="#fff" stroke="none"/>
<rect x="1292" y="729.5" width="2" height="3" fill="#fff" stroke="none"/>
<rect x="1305.5" y="730" width="3" height="2"/>
<rect x="1410.5" y="729.5" width="2" height="3" fill="#fff" stroke="none"/>
<rect x="1292" y="735.5" width="2" height="3" fill="#fff" stroke="none"/>
<rect x="1305.5" y="736" width="3" height="2"/>
<rect x="1410.5" y="735.5" width="2" height="3" fill="#fff" stroke="none"/>
<rect x="1292" y="741" width="2" height="3" fill="#fff" stroke="none"/>
<rect x="1304" y="741" width="2" height="3" fill="#fff" stroke="none"/>
<rect x="1410.5" y="741" width="2" height="3" fill="#fff" stroke="none"/>
<rect x="1292" y="746.5" width="2" height="3" fill="#fff" stroke="none"/>
<rect x="1305.5" y="747" width="4" height="2"/>
<rect x="1410.5" y="746.5" width="2" height="3" fill="#fff" stroke="none"/>
<rect x="1292" y="752.5" width="2" height="3" fill="#fff" stroke="none"/>
<rect x="1305.5" y="753" width="6" height="2"/>
<rect x="1410.5" y="752.5" width="2" height="3" fill="#fff" stroke="none"/>
<rect x="1292" y="758" width="2" height="3" fill="#fff" stroke="none"/>
<rect x="1305.5" y="758.5" width="5" height="2"/>
<rect x="1410.5" y="758" width="2" height="3" fill="#fff" stroke="none"/>
<rect x="1361.5" y="730" width="20" height="2"/>
<rect x="1287.5" y="764.0" width="11" height="3"/>
<rect x="1312.5" y="764.0" width="18" height="3"/>
<rect x="1362.5" y="764.0" width="17" height="3"/>
<rect x="1407.5" y="764.0" width="6" height="3"/>
<path d="M1283.5 768.500V810.500 M1420.5 768.500V810.500 M1290.5 768.500V810.500 M1298.5 768.500V810.500 M1310.5 768.500V810.500 M1322.5 768.500V810.500 M1332.5 768.500V810.500 M1344.5 768.500V810.500 M1382.5 768.500V810.500 M1283.5 773.5H1344.500 M1283.5 778.5H1344.500 M1283.5 789.5H1344.500 M1283.5 795H1344.500 M1283.5 800H1344.500 M1283.5 805.5H1344.500 M1344.5 781.500H1420.500 M1344.5 789.500H1382.500 M1344.5 797.500H1420.500 M1344.5 804.500H1420.500 M1363.5 781.500V797.500 M1373.5 781.500V797.500 M1348.5 789.500V797.500 M1352.5 789.500V797.500 M1356.5 789.500V797.500 M1360 789.500V797.500"/>
<rect x="1285" y="783.5" width="3" height="3"/>
<rect x="1292.5" y="783.5" width="5" height="2"/>
<rect x="1300" y="783.5" width="4" height="2"/>
<rect x="1307" y="783.5" width="2" height="3"/>
<rect x="1313" y="783.5" width="7" height="2"/>
<rect x="1324.5" y="783.5" width="3" height="3"/>
<rect x="1329" y="783.5" width="2" height="3"/>
<rect x="1335" y="783.5" width="6" height="2"/>
<rect x="1286.5" y="791.5" width="5" height="2"/>
<rect x="1316.5" y="791.5" width="5" height="3"/>
<rect x="1286.5" y="796.5" width="4" height="2"/>
<rect x="1316.5" y="797.5" width="4" height="2"/>
<rect x="1285.5" y="802.5" width="8" height="2"/>
<rect x="1317.5" y="801.5" width="3" height="8"/>
<rect x="1349.5" y="785.0" width="11" height="2"/>
<rect x="1366.5" y="784.5" width="4" height="3"/>
<rect x="1376.5" y="784.5" width="4" height="3"/>
<rect x="1376.5" y="792.0" width="4" height="3"/>
<rect x="1346.5" y="806.5" width="5" height="3"/>
<rect x="1355.5" y="806.5" width="6" height="3"/>
<rect x="1367.5" y="806.0" width="4" height="3"/>
<rect x="1384.5" y="806.0" width="4" height="2"/>
<rect x="673.5" y="230.5" width="4" height="4"/>
<rect x="730" y="230.5" width="4" height="4"/>
<rect x="733.5" y="230.5" width="4" height="4"/>
<rect x="762" y="230.5" width="4" height="4"/>
<rect x="768" y="230.5" width="4" height="4"/>
<rect x="776.5" y="230.5" width="4" height="4"/>
<rect x="822.5" y="230.5" width="4" height="4"/>
<rect x="843.5" y="230.5" width="4" height="4"/>
<rect x="847" y="230.5" width="4" height="4"/>
<rect x="895.5" y="230.5" width="4" height="4"/>
<rect x="908.5" y="230.5" width="4" height="4"/>
<rect x="917.5" y="230.5" width="4" height="4"/>
<rect x="1022.5" y="230.5" width="4" height="4"/>
<path d="M677.5 234.5 L677.5 253 L675.5 300 L675.5 306 M734 234.5 L734 271 M737.5 234.5 L738 250 L739 271 M766 234.5 L766 290 M768 234.5 L768 304 M777 234.5 L777.5 250 L779 258 M826.5 234.5 L826.5 262 L825 300 L825 351 M845 234.5 L845 305.5 L910.5 305.5 L910.5 290 L909 250 L908.5 234.5 M847.5 234.5 L847.5 305.5 M899.5 234.5 L899.5 250 L898 290 L898 305.5 M918 234.5 L918 345.5 M1023.5 234.5 L1023.5 244"/>
<rect x="739" y="250" width="4.5" height="21" fill="#fff" stroke="none"/>
<rect x="772" y="250" width="6" height="21" fill="#fff" stroke="none"/>
<rect x="739" y="253" width="39" height="2.5" fill="#fff" stroke="none"/>
<rect x="749" y="257" width="29" height="2" fill="#fff" stroke="none"/>
<rect x="744" y="259" width="28" height="12" fill="#000" stroke="none"/>
<rect x="722.5" y="271.5" width="59" height="8" fill="url(#h)"/>
<rect x="772" y="279.5" width="9.5" height="64.5" fill="url(#h)"/>
<rect x="718.5" y="290.5" width="41" height="17.5"/>
<rect x="726" y="293.5" width="32" height="12" fill="url(#h)"/>
<rect x="721" y="294" width="4" height="10"/>
<rect x="670.5" y="308.5" width="9.5" height="5" fill="url(#h)"/>
<rect x="710.5" y="308.5" width="48.5" height="5" fill="url(#h)"/>
<path d="M680 308.500L678.500 305.500H712.500L710.500 308.500V442.500H705.500V321.500H686.500V442.500H680z" fill="url(#h)"/>
<path d="M666.500 414V347Q666.500 337 676.500 337H677.500V414z" fill="url(#h)"/>
<path d="M724.500 414V347Q724.500 337 714.500 337H713.500V414z" fill="url(#h)"/>
<rect x="677.5" y="337" width="2.5" height="8.5" fill="url(#h)"/>
<rect x="710.5" y="337" width="3" height="8.5" fill="url(#h)"/>
<rect x="683" y="397" width="4" height="5" fill="#fff" stroke="none"/>
<rect x="690" y="397" width="4" height="5" fill="#fff" stroke="none"/>
<rect x="697" y="397" width="4" height="5"/>
<rect x="704" y="397" width="4" height="5" fill="#fff" stroke="none"/>
<rect x="724.5" y="390.5" width="61" height="6" fill="url(#h)"/>
<rect x="786" y="395" width="227.5" height="2" fill="#fff" stroke="none"/>
<path d="M640 442.5 L655 432.5 L665 428.5 L678 415.5 L680 414 L686.5 405 L686.5 442.5z" fill="url(#h)" stroke="none"/>
<path d="M652 414 L666.5 397 L666.5 414z" fill="url(#h)" stroke="none"/>
<path d="M640 442.5 L655 432.5 M652 414 L666.5 397"/>
<path d="M608 405 L622.5 406.5 L619.5 414 L617 424.5 L606 422.5z" fill="url(#h)"/>
<path d="M608 405 L611 409 L618 410 M606 417 L612 418 L618 414" stroke-width="2"/>
<path d="M619.5 414 L676 414 M619.5 415.5 L676 415.5"/>
<path d="M606 422.7Q615 431 632 432L650 432Q665 428 678 415" stroke="#000" stroke-width="4.500"/>
<path d="M606 422.7Q615 431 632 432L650 432Q665 428 678 415" stroke-width="1.500" stroke-dasharray="2 2"/>
<path d="M606 421Q615 429.3 632 430.3L650 430.3Q665 426.3 678 413.3 M606 424.4Q615 432.7 632 433.7L650 433.7Q665 429.7 678 416.7"/>
<path d="M643 427 L665 416.5 M654 427.5 L678 415"/>
<path d="M622.5 413.5 L627 405.5 L647.5 405.5 L647.5 413.5 M632.5 405.5 L632.5 411 L636 411 M639.5 405.5 L639.5 413.5"/>
<path d="M751 442.5 L736 432.5 L726 428.5 L713 415.5 L711 414 L704.5 405 L704.5 442.5z" fill="url(#h)" stroke="none"/>
<path d="M739 414 L724.5 397 L724.5 414z" fill="url(#h)" stroke="none"/>
<path d="M751 442.5 L736 432.5 M739 414 L724.5 397"/>
<path d="M783 405 L768.5 406.5 L771.5 414 L774 424.5 L785 422.5z" fill="url(#h)"/>
<path d="M783 405 L780 409 L773 410 M785 417 L779 418 L773 414" stroke-width="2"/>
<path d="M771.5 414 L715 414 M771.5 415.5 L715 415.5"/>
<path d="M785 422.7Q776 431 759 432L741 432Q726 428 713 415" stroke="#000" stroke-width="4.500"/>
<path d="M785 422.7Q776 431 759 432L741 432Q726 428 713 415" stroke-width="1.500" stroke-dasharray="2 2"/>
<path d="M785 421Q776 429.3 759 430.3L741 430.3Q726 426.3 713 413.3 M785 424.4Q776 432.7 759 433.7L741 433.7Q726 429.7 713 416.7"/>
<path d="M748 427 L726 416.5 M737 427.5 L713 415"/>
<path d="M768.5 413.5 L764 405.5 L743.5 405.5 L743.5 413.5 M758.5 405.5 L758.5 411 L755 411 M751.5 405.5 L751.5 413.5"/>
<path d="M772 344 L772 390 M775.5 344 L775.5 390 M781.5 337.5 L788.5 337.5 M788.5 333 L788.5 344.5 L781.5 344.5 M759.5 297 L772 297 M759.5 301 L772 301 M766 279.5 L766 304 L770 304 L770 279.5 M733 279.5 L733 290.5 M739 279.5 L739 290.5 M733 313.5 L733 390 M739 313.5 L739 390 M785.5 390.5 L860.5 390.5 M877.5 390.5 L954.5 390.5 M967 390.5 L1013.5 390.5 M781.5 344 L781.5 390 M641 442.5 L750.5 442.5 M686.5 442.5 L686.5 321.5"/>
<path d="M607.900 405.200L598.500 468V523.500H1074.500 M606 422.700L599.500 463 M783.900 405.500L793.500 467 M785 422.700L791.500 467"/>
<path d="M613 425.500L610.500 452L619.500 467H637L648.500 452L650 442.500 M670.500 442.500V452.500L685.500 467H709.500L724 452.500V442.500 M743 442.500L745 452.500L756.500 467H774L782 453.500L780 424"/>
<rect x="655" y="504.5" width="4" height="4"/>
<rect x="692.5" y="504.5" width="4" height="4"/>
<rect x="714.5" y="504.5" width="4" height="4"/>
<rect x="762.5" y="504.5" width="4" height="4"/>
<rect x="781.5" y="504.5" width="4" height="4"/>
<path d="M656.500 442.500V490L655.500 504.500 M695.500 442.500L696.500 504.500 M717.500 395.500V504.500 M764.500 467L762.500 504.500 M783.500 450L781.500 504.500" />
<rect x="844" y="519.5" width="11.5" height="3"/>
<path d="M790 271.500Q793 300 790 333" />
<path d="M960 333Q967 333 967 341V390.500" />
<rect x="845" y="306.5" width="55" height="2" fill="#fff" stroke="none"/>
<path d="M846 318L900 310 M850 312L901 320 M848 322L898 313 M852 316L896 324 M846 320L890 325.500 M856 311L901 316 M860 325L900 321" />
<path d="M782.500 390.500V358Q783 345.500 795 345.500H846.500Q859 347 860.500 360V390.500 M855 349Q852.500 357 853 375Q854 385 860 387 M877.500 390.500V358Q878 345.500 890 345.500H944Q954 347 954.500 357V390.500 M877.500 386.500H954.500" />
<rect x="904" y="376" width="6.5" height="13.5"/>
<rect x="945" y="376" width="6.5" height="13.5"/>
<path d="M803 369.500H827Q829 369.500 831.500 374.500V385Q830 390.500 827 390.500H803Q800.500 390.500 799.500 384Q798 379 799.500 374.500Q800.500 369.500 803 369.500z"/>
<path d="M815 369.500V390.500M816.500 369.500V390.500 M809 369.500V374M811 369.500V374M821 369.500V374M822.500 369.500V374 M804.500 386.500V390.500M808.500 386.500V390.500M823.500 386.500V390.500M827.500 386.500V390.500"/>
<rect x="810" y="359" width="3" height="8"/>
<rect x="813" y="357.5" width="8" height="9" fill="#fff" stroke="none"/>
<path d="M814.500 360.500H819.500" stroke="#000"/>
<path d="M813 359L815 356.500H819L821 358"/>
<rect x="821.5" y="352" width="7.5" height="15"/>
<path d="M820.500 352.500H826V355H822z M824 350.500H834L836 353L833 359.500H825z" fill="#fff"/>
<rect x="828" y="356" width="2" height="2" fill="#000" stroke="none"/>
<path d="M834 352.500Q840.500 356 840.500 366V378L833 384.500 M832 355Q838.500 358 838.500 366V376L833 381"/>
<path d="M831.500 374L835 377.500V382.500L831.500 385z" fill="#fff"/>
<rect x="832.500" y="379" width="1.500" height="2" fill="#000" stroke="none"/>
<path d="M781.5 271.5 L940 271.5 L940 333 M781.5 279.5 L932 279.5 L932 326.5 L790 326.5 M838 279.5 L838 326.5 M790 333 L960 333 M902.5 305.5 L902.5 326.5 M910 305.5 L910 326.5 M906.5 376 L906.5 386 M908.5 376 L908.5 386 M947.5 376 L947.5 386 M949.5 376 L949.5 386"/>
<path d="M835.5 398.5H993A35.3 35.3 0 0 1 993 469.1H835.5A35.3 35.3 0 0 1 835.5 398.5z"/>
<path d="M835.5 404.5H993A29.3 29.3 0 0 1 993 463.1H835.5A29.3 29.3 0 0 1 835.5 404.5z"/>
<path d="M836.0 398.5L836.0 402.5L838.0 402.5L838.0 398.5 M841.5 398.5L841.5 402.5L843.5 402.5L843.5 398.5 M847.0 398.5L847.0 402.5L849.0 402.5L849.0 398.5 M852.4 398.5L852.4 402.5L854.4 402.5L854.4 398.5 M857.9 398.5L857.9 402.5L859.9 402.5L859.9 398.5 M863.4 398.5L863.4 402.5L865.4 402.5L865.4 398.5 M868.9 398.5L868.9 402.5L870.9 402.5L870.9 398.5 M874.3 398.5L874.3 402.5L876.3 402.5L876.3 398.5 M879.8 398.5L879.8 402.5L881.8 402.5L881.8 398.5 M885.3 398.5L885.3 402.5L887.3 402.5L887.3 398.5 M890.8 398.5L890.8 402.5L892.8 402.5L892.8 398.5 M896.3 398.5L896.3 402.5L898.3 402.5L898.3 398.5 M901.7 398.5L901.7 402.5L903.7 402.5L903.7 398.5 M907.2 398.5L907.2 402.5L909.2 402.5L909.2 398.5 M912.7 398.5L912.7 402.5L914.7 402.5L914.7 398.5 M918.2 398.5L918.2 402.5L920.2 402.5L920.2 398.5 M923.6 398.5L923.6 402.5L925.6 402.5L925.6 398.5 M929.1 398.5L929.1 402.5L931.1 402.5L931.1 398.5 M934.6 398.5L934.6 402.5L936.6 402.5L936.6 398.5 M940.1 398.5L940.1 402.5L942.1 402.5L942.1 398.5 M945.6 398.5L945.6 402.5L947.6 402.5L947.6 398.5 M951.0 398.5L951.0 402.5L953.0 402.5L953.0 398.5 M956.5 398.5L956.5 402.5L958.5 402.5L958.5 398.5 M962.0 398.5L962.0 402.5L964.0 402.5L964.0 398.5 M967.5 398.5L967.5 402.5L969.5 402.5L969.5 398.5 M972.9 398.5L972.9 402.5L974.9 402.5L974.9 398.5 M978.4 398.5L978.4 402.5L980.4 402.5L980.4 398.5 M983.9 398.5L983.9 402.5L985.9 402.5L985.9 398.5 M989.4 398.5L989.4 402.5L991.4 402.5L991.4 398.5 M994.8 398.5L994.5 402.5L996.5 402.7L996.8 398.7 M1000.3 399.2L999.3 403.1L1001.3 403.6L1002.2 399.7 M1005.5 400.8L1004.0 404.5L1005.9 405.2L1007.4 401.5 M1010.5 403.1L1008.4 406.5L1010.1 407.6L1012.2 404.2 M1015.0 406.2L1012.4 409.2L1014.0 410.5L1016.5 407.5 M1019.0 409.9L1016.0 412.5L1017.3 414.1L1020.3 411.4 M1022.4 414.2L1019.0 416.4L1020.1 418.0L1023.5 415.9 M1025.1 419.0L1021.4 420.6L1022.2 422.4L1025.9 420.8 M1027.0 424.1L1023.1 425.1L1023.6 427.1L1027.5 426.1 M1028.1 429.5L1024.1 429.9L1024.3 431.9L1028.2 431.5 M1028.3 435.0L1024.3 434.7L1024.2 436.7L1028.2 437.0 M1027.7 440.4L1023.8 439.6L1023.4 441.5L1027.3 442.4 M1026.2 445.7L1022.5 444.2L1021.8 446.1L1025.5 447.6 M1024.0 450.7L1020.6 448.7L1019.5 450.4L1023.0 452.4 M1021.0 455.3L1017.9 452.8L1016.7 454.3L1019.8 456.8 M1017.4 459.4L1014.7 456.4L1013.2 457.7L1015.9 460.7 M1013.1 462.8L1010.9 459.5L1009.3 460.6L1011.5 463.9 M1008.4 465.6L1006.8 461.9L1004.9 462.8L1006.6 466.4 M1003.3 467.6L1002.2 463.7L1000.3 464.2L1001.4 468.1 M998.0 468.8L997.5 464.8L995.5 465.0L996.0 469.0 M992.5 469.1L992.5 465.1L990.5 465.1L990.5 469.1 M987.0 469.1L987.0 465.1L985.0 465.1L985.0 469.1 M981.5 469.1L981.5 465.1L979.5 465.1L979.5 469.1 M976.1 469.1L976.1 465.1L974.1 465.1L974.1 469.1 M970.6 469.1L970.6 465.1L968.6 465.1L968.6 469.1 M965.1 469.1L965.1 465.1L963.1 465.1L963.1 469.1 M959.6 469.1L959.6 465.1L957.6 465.1L957.6 469.1 M954.2 469.1L954.2 465.1L952.2 465.1L952.2 469.1 M948.7 469.1L948.7 465.1L946.7 465.1L946.7 469.1 M943.2 469.1L943.2 465.1L941.2 465.1L941.2 469.1 M937.7 469.1L937.7 465.1L935.7 465.1L935.7 469.1 M932.2 469.1L932.2 465.1L930.2 465.1L930.2 469.1 M926.8 469.1L926.8 465.1L924.8 465.1L924.8 469.1 M921.3 469.1L921.3 465.1L919.3 465.1L919.3 469.1 M915.8 469.1L915.8 465.1L913.8 465.1L913.8 469.1 M910.3 469.1L910.3 465.1L908.3 465.1L908.3 469.1 M904.9 469.1L904.9 465.1L902.9 465.1L902.9 469.1 M899.4 469.1L899.4 465.1L897.4 465.1L897.4 469.1 M893.9 469.1L893.9 465.1L891.9 465.1L891.9 469.1 M888.4 469.1L888.4 465.1L886.4 465.1L886.4 469.1 M882.9 469.1L882.9 465.1L880.9 465.1L880.9 469.1 M877.5 469.1L877.5 465.1L875.5 465.1L875.5 469.1 M872.0 469.1L872.0 465.1L870.0 465.1L870.0 469.1 M866.5 469.1L866.5 465.1L864.5 465.1L864.5 469.1 M861.0 469.1L861.0 465.1L859.0 465.1L859.0 469.1 M855.6 469.1L855.6 465.1L853.6 465.1L853.6 469.1 M850.1 469.1L850.1 465.1L848.1 465.1L848.1 469.1 M844.6 469.1L844.6 465.1L842.6 465.1L842.6 469.1 M839.1 469.1L839.1 465.1L837.1 465.1L837.1 469.1 M833.7 469.1L834.0 465.1L832.0 464.9L831.7 468.9 M828.2 468.4L829.2 464.5L827.2 464.0L826.3 467.9 M823.0 466.8L824.5 463.1L822.6 462.4L821.1 466.1 M818.0 464.5L820.1 461.1L818.4 460.0L816.3 463.4 M813.5 461.4L816.1 458.4L814.5 457.1L812.0 460.1 M809.5 457.7L812.5 455.1L811.2 453.5L808.2 456.2 M806.1 453.4L809.5 451.2L808.4 449.6L805.0 451.7 M803.4 448.6L807.1 447.0L806.3 445.2L802.6 446.8 M801.5 443.5L805.4 442.5L804.9 440.5L801.0 441.5 M800.4 438.1L804.4 437.7L804.2 435.7L800.3 436.1 M800.2 432.6L804.2 432.9L804.3 430.9L800.3 430.6 M800.8 427.2L804.7 428.0L805.1 426.1L801.2 425.2 M802.3 421.9L806.0 423.4L806.7 421.5L803.0 420.0 M804.5 416.9L807.9 418.9L809.0 417.2L805.5 415.2 M807.5 412.3L810.6 414.8L811.8 413.3L808.7 410.8 M811.1 408.2L813.8 411.2L815.3 409.9L812.6 406.9 M815.4 404.8L817.6 408.1L819.2 407.0L817.0 403.7 M820.1 402.0L821.7 405.7L823.6 404.8L821.9 401.2 M825.2 400.0L826.3 403.9L828.2 403.4L827.1 399.5 M830.5 398.8L831.0 402.8L833.0 402.6L832.5 398.6"/>
<path d="M838.7 404.5L838.7 405.7L840.7 405.7L840.7 404.5 M844.2 404.5L844.2 405.7L846.2 405.7L846.2 404.5 M849.7 404.5L849.7 405.7L851.7 405.7L851.7 404.5 M855.1 404.5L855.1 405.7L857.1 405.7L857.1 404.5 M860.6 404.5L860.6 405.7L862.6 405.7L862.6 404.5 M866.1 404.5L866.1 405.7L868.1 405.7L868.1 404.5 M871.6 404.5L871.6 405.7L873.6 405.7L873.6 404.5 M877.0 404.5L877.0 405.7L879.0 405.7L879.0 404.5 M882.5 404.5L882.5 405.7L884.5 405.7L884.5 404.5 M888.0 404.5L888.0 405.7L890.0 405.7L890.0 404.5 M893.5 404.5L893.5 405.7L895.5 405.7L895.5 404.5 M899.0 404.5L899.0 405.7L901.0 405.7L901.0 404.5 M904.4 404.5L904.4 405.7L906.4 405.7L906.4 404.5 M909.9 404.5L909.9 405.7L911.9 405.7L911.9 404.5 M915.4 404.5L915.4 405.7L917.4 405.7L917.4 404.5 M920.9 404.5L920.9 405.7L922.9 405.7L922.9 404.5 M926.3 404.5L926.3 405.7L928.3 405.7L928.3 404.5 M931.8 404.5L931.8 405.7L933.8 405.7L933.8 404.5 M937.3 404.5L937.3 405.7L939.3 405.7L939.3 404.5 M942.8 404.5L942.8 405.7L944.8 405.7L944.8 404.5 M948.3 404.5L948.3 405.7L950.3 405.7L950.3 404.5 M953.7 404.5L953.7 405.7L955.7 405.7L955.7 404.5 M959.2 404.5L959.2 405.7L961.2 405.7L961.2 404.5 M964.7 404.5L964.7 405.7L966.7 405.7L966.7 404.5 M970.2 404.5L970.2 405.7L972.2 405.7L972.2 404.5 M975.6 404.5L975.6 405.7L977.6 405.7L977.6 404.5 M981.1 404.5L981.1 405.7L983.1 405.7L983.1 404.5 M986.6 404.5L986.6 405.7L988.6 405.7L988.6 404.5 M992.1 404.5L992.1 405.7L994.1 405.7L994.1 404.5 M996.6 404.7L996.4 405.9L998.4 406.2L998.6 405.0 M1001.1 405.6L1000.7 406.8L1002.6 407.4L1003.0 406.2 M1005.3 407.2L1004.8 408.3L1006.6 409.2L1007.1 408.1 M1009.3 409.4L1008.6 410.4L1010.2 411.6L1010.9 410.6 M1012.8 412.2L1012.0 413.1L1013.4 414.5L1014.3 413.6 M1015.9 415.6L1015.0 416.3L1016.2 417.9L1017.1 417.2 M1018.5 419.3L1017.4 419.9L1018.4 421.6L1019.4 421.1 M1020.4 423.4L1019.3 423.8L1019.9 425.7L1021.1 425.3 M1021.7 427.8L1020.5 428.0L1020.9 430.0L1022.0 429.8 M1022.3 432.3L1021.1 432.3L1021.1 434.3L1022.3 434.3 M1022.2 436.8L1021.0 436.7L1020.7 438.7L1021.9 438.8 M1021.3 441.3L1020.2 441.0L1019.6 442.9L1020.8 443.2 M1019.8 445.6L1018.8 445.1L1017.9 446.9L1019.0 447.4 M1017.7 449.6L1016.7 448.9L1015.6 450.6L1016.6 451.3 M1015.0 453.2L1014.1 452.4L1012.7 453.9L1013.6 454.7 M1011.7 456.4L1011.0 455.4L1009.4 456.7L1010.1 457.6 M1008.0 459.0L1007.4 458.0L1005.6 458.9L1006.2 460.0 M1003.9 461.0L1003.5 459.9L1001.6 460.6L1002.0 461.7 M999.6 462.4L999.3 461.2L997.4 461.6L997.6 462.8 M995.1 463.0L995.0 461.8L993.0 461.9L993.1 463.1 M989.8 463.1L989.8 461.9L987.8 461.9L987.8 463.1 M984.3 463.1L984.3 461.9L982.3 461.9L982.3 463.1 M978.8 463.1L978.8 461.9L976.8 461.9L976.8 463.1 M973.4 463.1L973.4 461.9L971.4 461.9L971.4 463.1 M967.9 463.1L967.9 461.9L965.9 461.9L965.9 463.1 M962.4 463.1L962.4 461.9L960.4 461.9L960.4 463.1 M956.9 463.1L956.9 461.9L954.9 461.9L954.9 463.1 M951.5 463.1L951.5 461.9L949.5 461.9L949.5 463.1 M946.0 463.1L946.0 461.9L944.0 461.9L944.0 463.1 M940.5 463.1L940.5 461.9L938.5 461.9L938.5 463.1 M935.0 463.1L935.0 461.9L933.0 461.9L933.0 463.1 M929.5 463.1L929.5 461.9L927.5 461.9L927.5 463.1 M924.1 463.1L924.1 461.9L922.1 461.9L922.1 463.1 M918.6 463.1L918.6 461.9L916.6 461.9L916.6 463.1 M913.1 463.1L913.1 461.9L911.1 461.9L911.1 463.1 M907.6 463.1L907.6 461.9L905.6 461.9L905.6 463.1 M902.2 463.1L902.2 461.9L900.2 461.9L900.2 463.1 M896.7 463.1L896.7 461.9L894.7 461.9L894.7 463.1 M891.2 463.1L891.2 461.9L889.2 461.9L889.2 463.1 M885.7 463.1L885.7 461.9L883.7 461.9L883.7 463.1 M880.2 463.1L880.2 461.9L878.2 461.9L878.2 463.1 M874.8 463.1L874.8 461.9L872.8 461.9L872.8 463.1 M869.3 463.1L869.3 461.9L867.3 461.9L867.3 463.1 M863.8 463.1L863.8 461.9L861.8 461.9L861.8 463.1 M858.3 463.1L858.3 461.9L856.3 461.9L856.3 463.1 M852.9 463.1L852.9 461.9L850.9 461.9L850.9 463.1 M847.4 463.1L847.4 461.9L845.4 461.9L845.4 463.1 M841.9 463.1L841.9 461.9L839.9 461.9L839.9 463.1 M836.4 463.1L836.4 461.9L834.4 461.9L834.4 463.1 M831.9 462.9L832.1 461.7L830.1 461.4L829.9 462.6 M827.4 462.0L827.8 460.8L825.9 460.2L825.5 461.4 M823.2 460.4L823.7 459.3L821.9 458.4L821.4 459.5 M819.2 458.2L819.9 457.2L818.3 456.0L817.6 457.0 M815.7 455.4L816.5 454.5L815.1 453.1L814.2 454.0 M812.6 452.0L813.5 451.3L812.3 449.7L811.4 450.4 M810.0 448.3L811.1 447.7L810.1 446.0L809.1 446.5 M808.1 444.2L809.2 443.8L808.6 441.9L807.4 442.3 M806.8 439.8L808.0 439.6L807.6 437.6L806.5 437.8 M806.2 435.3L807.4 435.3L807.4 433.3L806.2 433.3 M806.3 430.8L807.5 430.9L807.8 428.9L806.6 428.8 M807.2 426.3L808.3 426.6L808.9 424.7L807.7 424.4 M808.7 422.0L809.7 422.5L810.6 420.7L809.5 420.2 M810.8 418.0L811.8 418.7L812.9 417.0L811.9 416.3 M813.5 414.4L814.4 415.2L815.8 413.7L814.9 412.9 M816.8 411.2L817.5 412.2L819.1 410.9L818.4 410.0 M820.5 408.6L821.1 409.6L822.9 408.7L822.3 407.6 M824.6 406.6L825.0 407.7L826.9 407.0L826.5 405.9 M828.9 405.2L829.2 406.4L831.1 406.0L830.9 404.8 M833.4 404.6L833.5 405.8L835.5 405.7L835.4 404.5"/>
<circle cx="835.5" cy="434" r="21.5"/>
<circle cx="835.5" cy="434" r="19"/>
<circle cx="835.5" cy="433.8" r="26" stroke-width="3.500" stroke-dasharray="2 2.200" />
<circle cx="835.5" cy="433.8" r="24" />
<circle cx="993" cy="434" r="21.5"/>
<circle cx="993" cy="434" r="19"/>
<circle cx="993" cy="433.8" r="26" stroke-width="3.500" stroke-dasharray="2 2.200" />
<circle cx="993" cy="433.8" r="24" />
<rect x="835.500" y="416.500" width="157.500" height="35.500" fill="#000"/>
<circle cx="835.5" cy="434" r="5.2"/>
<circle cx="835.5" cy="434" r="3"/>
<circle cx="835.5" cy="434" r="1.2"/>
<circle cx="993" cy="434" r="5.2"/>
<circle cx="993" cy="434" r="3"/>
<circle cx="993" cy="434" r="1.2"/>
<circle cx="856" cy="434" r="7.3"/>
<circle cx="885.5" cy="434" r="7.3"/>
<circle cx="914.5" cy="434" r="7.3"/>
<circle cx="943.5" cy="434" r="7.3"/>
<circle cx="973" cy="434" r="7.3"/>
<path d="M899.500 452Q900 455 903 455H910Q913 455 913.500 452" />
<rect x="905.5" y="504.5" width="4" height="4"/>
<path d="M798.500 416Q804 402 817 397" />
<path d="M800.500 417Q806 404 818 399" />
<rect x="1025.5" y="250.5" width="3.5" height="193.5"/>
<path d="M1025.500 345H1029 M1025.500 347.5H1029 M1025.500 350H1029 M1025.500 352.5H1029 M1025.500 377.5H1029 M1025.500 380.5H1029 M1025.500 383.5H1029"/>
<rect x="1101.5" y="337.5" width="3" height="10.5"/>
<rect x="1046" y="325" width="18.5" height="31"/>
<rect x="1048" y="319.5" width="14" height="5.5"/>
<rect x="1050" y="321" width="4" height="2.5"/>
<rect x="1056" y="321" width="4.5" height="2.5"/>
<rect x="1053" y="346" width="6" height="2" fill="#fff" stroke="none"/>
<path d="M1050 329L1053 332L1056 329L1059 332M1051 333.500H1058" stroke-width="1.500"/>
<rect x="1052.5" y="357" width="12" height="2.5" fill="#fff" stroke="none"/>
<rect x="1033.5" y="348.5" width="19" height="28.5"/>
<rect x="1052.5" y="362" width="15" height="15"/>
<rect x="1085.5" y="341.5" width="4" height="4"/>
<rect x="1085.5" y="360.5" width="4" height="4"/>
<rect x="1085.5" y="416.5" width="4" height="4"/>
<path d="M1061.3 376.9L1044.3 381.8 M1044.3 381.8L1053.1 385.1 M1056.6 384.0L1066.9 387.0L1045.0 392.9 M1045.0 392.9L1053.1 396.2 M1056.6 395.1L1066.1 398.1L1045.8 403.9 M1045.8 403.9L1053.1 407.2 M1056.6 406.1L1065.2 409.1L1046.5 415.0 M1046.5 415.0L1053.1 418.3 M1056.6 417.1L1064.4 420.1L1047.3 426.0 M1047.3 426.0L1053.1 429.3 M1056.6 428.2L1063.5 431.2L1048.0 437.1 M1048.0 437.1L1053.1 440.4 M1056.6 439.2L1062.7 442.2L1048.8 448.1 M1048.8 448.1L1053.1 451.4 M1056.6 450.3L1061.8 453.3L1049.5 459.2 M1049.5 459.2L1053.1 462.5 M1056.6 461.4L1061.0 464.4L1050.3 470.2 M1050.3 470.2L1053.1 473.5 M1056.6 472.4L1060.1 475.4L1051.0 481.2 M1051.0 481.2L1053.1 484.6 M1056.6 483.4L1058.2 486.4L1055 491.4" stroke-width="1.600"/>
<path d="M1053 487L1055.500 492L1057 487"/>
<rect x="1054.5" y="504.5" width="4" height="4"/>
<path d="M835.5 412.5 L835.5 455 M854.5 434 L815.5 434 M993 412.5 L993 455 M974 434 L1013 434 M835.5 416.5 L835.5 452 M860 427.5 L860 440 M969 427.5 L969 440 M846 434 L860 434 M969 434 L985 434 M907.5 455 L907.5 504.5 M1013.5 397.5 L1013.5 244.5 L1105.5 244.5 L1105.5 468.5 M1033.5 244.5 L1033.5 444 L1025.5 444 M1013.5 397.5 L1022 397.5 M1000 468.5 L1107 468.5 M1046 337.5 L1064.5 337.5 M1046 344 L1064.5 344 M1026 341 L1046 341.5 L1085.5 343.5 M1064.5 359.5 L1074.5 359.5 L1080 362.5 L1085.5 362.5 M1074.5 359.5 L1074.5 523.5 M1085.5 418.5 L1047 417 L1027.5 416 M1033.5 381.5 L1040 379 L1047 377.5 M1053 377 L1053 488 M1056.5 377 L1056.5 488 M1055.5 492 L1056.5 497 L1056.5 504.5"/>
<rect x="1196.5" y="269.5" width="8" height="2.5"/>
<rect x="1318.5" y="269.5" width="8" height="2.5"/>
<path d="M1210.5 254.500L1216.0 251H1226.0L1231.5 254.500" stroke-width="1.500"/>
<rect x="1218.0" y="249.500" width="6" height="1.500" fill="#fff" stroke="none"/>
<rect x="1210.5" y="254.500" width="21.0" height="5.500" stroke-width="1.300"/>
<rect x="1217.5" y="256.500" width="7" height="2"/>
<rect x="1211.5" y="260" width="5" height="12" fill="#fff" stroke="none"/>
<rect x="1225.5" y="260" width="5" height="12" fill="#fff" stroke="none"/>
<path d="M1237.5 254.500L1243.5 251H1253.5L1259.5 254.500" stroke-width="1.500"/>
<rect x="1245.5" y="249.500" width="6" height="1.500" fill="#fff" stroke="none"/>
<rect x="1237.5" y="254.500" width="22.0" height="5.500" stroke-width="1.300"/>
<rect x="1245.0" y="256.500" width="7" height="2"/>
<rect x="1238.5" y="260" width="5" height="12" fill="#fff" stroke="none"/>
<rect x="1253.5" y="260" width="5" height="12" fill="#fff" stroke="none"/>
<path d="M1265.5 254.500L1271.0 251H1281.0L1286.5 254.500" stroke-width="1.500"/>
<rect x="1273.0" y="249.500" width="6" height="1.500" fill="#fff" stroke="none"/>
<rect x="1265.5" y="254.500" width="21.0" height="5.500" stroke-width="1.300"/>
<rect x="1272.5" y="256.500" width="7" height="2"/>
<rect x="1266.5" y="260" width="5" height="12" fill="#fff" stroke="none"/>
<rect x="1280.5" y="260" width="5" height="12" fill="#fff" stroke="none"/>
<path d="M1292.5 254.500L1298.5 251H1308.5L1314.5 254.500" stroke-width="1.500"/>
<rect x="1300.5" y="249.500" width="6" height="1.500" fill="#fff" stroke="none"/>
<rect x="1292.5" y="254.500" width="22.0" height="5.500" stroke-width="1.300"/>
<rect x="1300.0" y="256.500" width="7" height="2"/>
<rect x="1293.5" y="260" width="5" height="12" fill="#fff" stroke="none"/>
<rect x="1308.5" y="260" width="5" height="12" fill="#fff" stroke="none"/>
<rect x="1256" y="243" width="9" height="1.5" fill="#fff" stroke="none"/>
<rect x="1244" y="290" width="18.5" height="15.5"/>
<rect x="1246.5" y="292.5" width="13.5" height="13"/>
<circle cx="1253" cy="299.5" r="6"/>
<circle cx="1253" cy="299.5" r="3.2"/>
<path d="M1244 296L1237 301Q1234 305 1239 305.500L1244 304"/>
<path d="M1240.500 308.500L1243 306.500H1279L1282 308.500"/>
<path d="M1233 390V346Q1233 337 1242 337H1282Q1290.500 337 1290.500 346V390" />
<path d="M1204.500 358Q1205 346 1216 345.500H1233 M1204.500 384Q1212 386 1220 384.500"/>
<path d="M1290.500 345.500H1318.500 M1307 345.500Q1291 350 1291.500 368Q1294 386 1312 385.500L1318.500 384"/>
<rect x="1292.5" y="385" width="6.5" height="5"/>
<rect x="1221" y="350.5" width="12" height="17.5"/>
<rect x="1223" y="352" width="8" height="4"/>
<circle cx="1229" cy="360" r="3"/>
<rect x="1221" y="362" width="5" height="6"/>
<path d="M1233 369.500Q1219 368 1218.500 379.500Q1219.500 390 1233 389.500"/>
<circle cx="1229.5" cy="379.5" r="3"/>
<path d="M1293 374.500Q1310 378 1330 378L1357 380.500H1370"/>
<rect x="1370" y="377.5" width="4" height="4"/>
<path d="M1164.500 399H1172.500 M1351 399H1359 M1164.500 401.5H1172.500 M1351 401.5H1359 M1164.500 404.5H1172.500 M1351 404.5H1359 M1164.500 407H1172.500 M1351 407H1359 M1164.500 410H1172.500 M1351 410H1359 M1164.500 412.5H1172.500 M1351 412.5H1359 M1164.500 415H1172.500 M1351 415H1359 M1164.500 418H1172.500 M1351 418H1359 M1164.500 420.5H1172.500 M1351 420.5H1359 M1164.500 423.5H1172.500 M1351 423.5H1359 M1164.500 426H1172.500 M1351 426H1359 M1164.500 428.5H1172.500 M1351 428.5H1359 M1164.500 431.5H1172.500 M1351 431.5H1359 M1164.500 434H1172.500 M1351 434H1359 M1164.500 437H1172.500 M1351 437H1359 M1164.500 439.5H1172.500 M1351 439.5H1359 M1164.500 442H1172.500 M1351 442H1359 M1164.500 445H1172.500 M1351 445H1359 M1164.500 447.5H1172.500 M1351 447.5H1359 M1164.500 450.5H1172.500 M1351 450.5H1359 M1164.500 453H1172.500 M1351 453H1359 M1164.500 455.5H1172.500 M1351 455.5H1359 M1164.500 458.5H1172.500 M1351 458.5H1359 M1164.500 461H1172.500 M1351 461H1359 M1164.500 464H1172.500 M1351 464H1359 M1164.500 466.5H1172.500 M1351 466.5H1359 M1164.500 399V468.500H1202 M1359 399V468.500H1321 M1164.500 399H1172.500 M1351 399H1359"/>
<path d="M1172.500 405L1189 406L1179 421.500L1175 452L1184 467H1172.500z" fill="#000"/>
<path d="M1351 405L1333 406L1344 423L1346.500 452L1338.500 467H1351z" fill="#000"/>
<path d="M1172.500 408.500H1175.5 M1351 408.500H1348 M1172.500 412.500H1178.5 M1351 412.500H1345 M1172.500 416.500H1179.5 M1351 416.500H1344 M1172.500 420.500H1176.5 M1351 420.500H1347 M1172.500 424.500H1180.5 M1351 424.500H1343 M1172.500 428.500H1181.5 M1351 428.500H1342 M1172.500 432.500H1178.5 M1351 432.500H1345 M1172.500 436.500H1182.5 M1351 436.500H1341 M1172.500 440.500H1182.5 M1351 440.500H1341 M1172.500 444.500H1177.5 M1351 444.500H1346 M1172.500 448.500H1180.5 M1351 448.500H1343 M1172.500 452.500H1180.5 M1351 452.500H1343 M1172.500 456.500H1175.5 M1351 456.500H1348 M1172.500 460.500H1178.5 M1351 460.500H1345 M1172.500 464.500H1178.5 M1351 464.500H1345" stroke-width="2"/>
<path d="M1176 408L1186 405L1180 420L1176 440 M1347.500 408L1337 405L1343.500 420L1347.500 440" stroke-width="2"/>
<path d="M1189.500 405.500H1206.500L1216 420.500L1213 452L1202 467H1184L1175 452L1179 421.500z" fill="#000"/>
<path d="M1249 405.500H1271.500L1288 420.500V453L1272.500 467.500H1249.500L1233.500 453V420.500z" fill="#000"/>
<path d="M1314 405.500H1332.500L1344 423L1346.500 452L1338.500 467H1321L1308.500 452L1305 421.500z" fill="#000"/>
<rect x="1210" y="406.5" width="3.5" height="6"/>
<rect x="1309" y="406.5" width="3.5" height="6"/>
<path d="M1216 428.500Q1226 432 1233.500 424 M1216 431.500Q1227 434 1233.500 428 M1305 428.500Q1296 432 1288 424 M1305 431.500Q1295 434 1288 428" stroke-width="1.500"/>
<rect x="1230" y="444.5" width="3.5" height="4"/>
<rect x="1288" y="444.5" width="3.5" height="4"/>
<path d="M1258.500 467.500V472L1263.500 474L1258.500 477L1263.500 480L1258.500 483L1261 488.500L1263.500 483V467.500 M1258.500 477V483" stroke-width="1.300"/>
<path d="M1185.5 396.5 L1185.5 272 L1338 272 L1338 396.5 M1185.5 279.5 L1338 279.5 M1185.5 308.5 L1338 308.5 M1185.5 314 L1338 314 M1196.5 279.5 L1196.5 308.5 M1196.5 314 L1196.5 390 M1204.5 279.5 L1204.5 308.5 M1204.5 314 L1204.5 390 M1318.5 279.5 L1318.5 308.5 M1318.5 314 L1318.5 390 M1326.5 279.5 L1326.5 308.5 M1326.5 314 L1326.5 390 M1239 254 L1239 244.5 L1284 244.5 L1284 254 M1251 290 L1261 280.5 L1264 282.5 L1255 292 M1253 289 L1262 281 M1246.5 314 L1246.5 337 M1276.5 314 L1276.5 337 M1290.5 372 L1295 372 L1295 385 M1185.5 390 L1246 390 M1277 390 L1338 390 M1172.5 468.5 L1172.5 396.5 L1246 396.5 M1277 396.5 L1351 396.5 L1351 468.5 M1260.5 396.5 L1260.5 405.5 M1262.5 396.5 L1262.5 405.5 M1274.5 467.5 L1290 453 M1231.5 396.5 L1217 412.5 M1239.5 396.5 L1231 412.5 M1241.5 396.5 L1233 412.5 M1213 412.5 L1240.5 412.5 M1282.5 396.5 L1292.5 412.5 M1284.5 396.5 L1294.5 412.5 M1291.5 396.5 L1307.5 412.5 M1279.5 412.5 L1307.5 412.5 M1203 399 L1203 405.5 M1319 399 L1319 405.5 M1215 442.5 L1233.5 442.5 M1215 444.5 L1233.5 444.5 M1288 442.5 L1307 442.5 M1288 444.5 L1307 444.5 M1214 438 L1233.5 431 M1307 438 L1288 431"/>
<path d="M686.1 708.7A54 54 0 0 1 686.1 602.3"/>
<path d="M681.5 663 L617.5 663 L617.5 648 L681.5 648z" fill="#000"/>
<path d="M617.5 661 L609.5 661 L609.5 650 L617.5 650z" fill="#000"/>
<path d="M615.5 657.5 L609.5 657.5 L609.5 653.5 L615.5 653.5z"/>
<path d="M617.5 661 L623 661 L623 650 L617.5 650"/>
<path d="M-2.300 -27Q-8.500 0 -2.300 27H2.300Q8.500 0 2.300 -27z" transform="translate(604.0 655.5) rotate(180)" fill="#000"/>
<path d="M665.5 654.0L651.5 654.0" stroke-width="1.500"/>
<path d="M680.5 651 L635 605.5 L645.5 595 L691 640.5z" fill="#000"/>
<path d="M636.5 604 L631 598.5 L638.5 591 L644 596.5z" fill="#000"/>
<path d="M637.5 600.5 L633.5 596 L636 593.5 L640.5 597.5z"/>
<path d="M636.5 604 L640.5 608 L648 600.5 L644 596.5"/>
<path d="M-2.300 -27Q-8.500 0 -2.300 27H2.300Q8.500 0 2.300 -27z" transform="translate(630.8 590.8) rotate(225)" fill="#000"/>
<path d="M675.3 633.2L665.4 623.3" stroke-width="1.500"/>
<path d="M691 670.5 L645.5 716 L635 705.5 L680.5 660z" fill="#000"/>
<path d="M644 714.5 L638.5 720 L631 712.5 L636.5 707z" fill="#000"/>
<path d="M640.5 713.5 L636 717.5 L633.5 715 L637.5 710.5z"/>
<path d="M644 714.5 L648 710.5 L640.5 703 L636.5 707"/>
<path d="M-2.300 -27Q-8.500 0 -2.300 27H2.300Q8.500 0 2.300 -27z" transform="translate(630.8 720.2) rotate(135)" fill="#000"/>
<path d="M673.2 675.7L663.3 685.6" stroke-width="1.500"/>
<path d="M688 641.5 L688 577.5 L703 577.5 L703 641.5z" fill="#000"/>
<path d="M690 577.5 L690 569.5 L701 569.5 L701 577.5z" fill="#000"/>
<path d="M693.5 575.5 L693.5 569.5 L697.5 569.5 L697.5 575.5z"/>
<path d="M690 577.5 L690 583 L701 583 L701 577.5"/>
<path d="M-2.300 -27Q-8.500 0 -2.300 27H2.300Q8.500 0 2.300 -27z" transform="translate(695.5 564.0) rotate(270)" fill="#000"/>
<path d="M697.0 625.5L697.0 611.5" stroke-width="1.500"/>
<path d="M703 669.5 L703 733.5 L688 733.5 L688 669.5z" fill="#000"/>
<path d="M701 733.5 L701 741.5 L690 741.5 L690 733.5z" fill="#000"/>
<path d="M697.5 735.5 L697.5 741.5 L693.5 741.5 L693.5 735.5z"/>
<path d="M701 733.5 L701 728 L690 728 L690 733.5"/>
<path d="M-2.300 -27Q-8.500 0 -2.300 27H2.300Q8.500 0 2.300 -27z" transform="translate(695.5 747.0) rotate(90)" fill="#000"/>
<path d="M694.0 685.5L694.0 699.5" stroke-width="1.500"/>
<path d="M722 579.5H718.5Q713.2 580.0 709.2 583.0L673.6 642.4A25.5 25.5 0 0 0 673.6 668.6L709.2 728.0Q713.2 731.0 718.5 731.5H722z" fill="#000"/>
<path d="M722 583.0H720Q716.5 583.5 712.5 586.5L676.8 643.9A22 22 0 0 0 676.8 667.1L712.5 724.5Q716.5 727.5 720 728.0H722"/>
<circle cx="695.5" cy="655.5" r="20.3"/>
<circle cx="695.5" cy="655.5" r="16.5"/>
<rect x="718.5" y="641" width="3.5" height="6"/>
<rect x="720" y="647" width="4.5" height="8"/>
<circle cx="736.5" cy="594.5" r="3"/>
<circle cx="736.5" cy="716.5" r="3"/>
<path d="M741.500 574L748 570.500L757 579.500 M741.500 574L749 579.500 M741.500 737L748 740.500L757 731.500 M741.500 737L749 731.500"/>
<rect x="738" y="604.5" width="41" height="22.5"/>
<rect x="740" y="606.5" width="37" height="18.5"/>
<path d="M746 608.5V623H770V608.5z M744 610.5H750V614.75H746 M746 617.75H750V621H744 M772 610.5H766V614.75H770 M770 617.75H766V621H772"/>
<circle cx="743.500" cy="610.0" r="1" fill="#fff"/><circle cx="774" cy="610.0" r="1" fill="#fff"/><circle cx="774" cy="622" r="1" fill="#fff"/>
<rect x="762" y="613.75" width="3" height="4" fill="#fff" stroke="none"/>
<rect x="738" y="632.5" width="41" height="21.5"/>
<rect x="740" y="634.5" width="37" height="17.5"/>
<path d="M746 636.5V650H770V636.5z M744 638.5H750V642.25H746 M746 645.25H750V648H744 M772 638.5H766V642.25H770 M770 645.25H766V648H772"/>
<circle cx="743.500" cy="638.0" r="1" fill="#fff"/><circle cx="774" cy="638.0" r="1" fill="#fff"/><circle cx="774" cy="649" r="1" fill="#fff"/>
<rect x="762" y="641.25" width="3" height="4" fill="#fff" stroke="none"/>
<rect x="738" y="659.5" width="41" height="22"/>
<rect x="740" y="661.5" width="37" height="18"/>
<path d="M746 663.5V677.5H770V663.5z M744 665.5H750V669.5H746 M746 672.5H750V675.5H744 M772 665.5H766V669.5H770 M770 672.5H766V675.5H772"/>
<circle cx="743.500" cy="665.0" r="1" fill="#fff"/><circle cx="774" cy="665.0" r="1" fill="#fff"/><circle cx="774" cy="676.5" r="1" fill="#fff"/>
<rect x="762" y="668.5" width="3" height="4" fill="#fff" stroke="none"/>
<rect x="738" y="687" width="41" height="21.5"/>
<rect x="740" y="689" width="37" height="17.5"/>
<path d="M746 691V704.5H770V691z M744 693H750V696.75H746 M746 699.75H750V702.5H744 M772 693H766V696.75H770 M770 699.75H766V702.5H772"/>
<circle cx="743.500" cy="692.5" r="1" fill="#fff"/><circle cx="774" cy="692.5" r="1" fill="#fff"/><circle cx="774" cy="703.5" r="1" fill="#fff"/>
<rect x="762" y="695.75" width="3" height="4" fill="#fff" stroke="none"/>
<path d="M846.4 587.4A75.7 75.7 0 0 0 846.4 723.4 M914.0 588.0A75.7 75.7 0 0 1 939.7 609.3"/>
<rect x="844.500" y="615.500" width="66.500" height="81" rx="5"/>
<rect x="846.500" y="617.500" width="62.500" height="77" rx="4" stroke-dasharray="2 1"/>
<g stroke-width="2.400"><circle cx="852.4" cy="622.4" r="2.400"/><circle cx="860.2" cy="622.4" r="2.400"/><circle cx="868.0" cy="622.4" r="2.400"/><circle cx="875.7" cy="622.4" r="2.400"/><circle cx="883.5" cy="622.4" r="2.400"/><circle cx="891.2" cy="622.4" r="2.400"/><circle cx="899.5" cy="622.4" r="2.400"/><circle cx="904.4" cy="628.0" r="2.400"/><circle cx="904.0" cy="635.0" r="2.400"/><circle cx="850.0" cy="630.0" r="2.400"/><circle cx="850.0" cy="638.0" r="2.400"/><circle cx="850.0" cy="646.8" r="2.400"/><circle cx="850.0" cy="655.0" r="2.400"/><circle cx="850.0" cy="663.4" r="2.400"/><circle cx="850.0" cy="671.7" r="2.400"/><circle cx="850.0" cy="680.0" r="2.400"/><circle cx="871.2" cy="636.2" r="2.400"/><circle cx="879.5" cy="636.2" r="2.400"/><circle cx="887.8" cy="636.2" r="2.400"/><circle cx="896.0" cy="636.2" r="2.400"/><circle cx="864.6" cy="639.5" r="2.400"/><circle cx="864.6" cy="646.8" r="2.400"/><circle cx="869.5" cy="649.5" r="2.400"/><circle cx="877.3" cy="649.5" r="2.400"/><circle cx="886.2" cy="649.5" r="2.400"/><circle cx="894.5" cy="648.5" r="2.400"/><circle cx="902.2" cy="647.9" r="2.400"/><circle cx="906.1" cy="655.6" r="2.400"/><circle cx="869.5" cy="660.6" r="2.400"/><circle cx="877.3" cy="660.6" r="2.400"/><circle cx="886.2" cy="660.6" r="2.400"/><circle cx="894.5" cy="661.5" r="2.400"/><circle cx="902.2" cy="662.3" r="2.400"/><circle cx="863.5" cy="665.6" r="2.400"/><circle cx="863.5" cy="672.2" r="2.400"/><circle cx="871.2" cy="674.4" r="2.400"/><circle cx="879.5" cy="674.4" r="2.400"/><circle cx="888.4" cy="674.4" r="2.400"/><circle cx="896.1" cy="675.0" r="2.400"/><circle cx="903.3" cy="676.0" r="2.400"/><circle cx="904.4" cy="683.3" r="2.400"/><circle cx="853.5" cy="689.4" r="2.400"/><circle cx="860.7" cy="689.4" r="2.400"/><circle cx="867.9" cy="689.4" r="2.400"/><circle cx="876.2" cy="689.4" r="2.400"/><circle cx="884.0" cy="689.4" r="2.400"/><circle cx="891.7" cy="689.4" r="2.400"/><circle cx="899.5" cy="689.4" r="2.400"/></g>
<path d="M854.4 630.5L858.4 625.5M856.4 631.5L860.4 626.5M854.4 627.5L856.4 625.5"/>
<path d="M894.8 631.6L898.8 626.6M896.8 632.6L900.8 627.6M894.8 628.6L896.8 626.6"/>
<path d="M867.7 645.4L871.7 640.4M869.7 646.4L873.7 641.4M867.7 642.4L869.7 640.4"/>
<path d="M893.7 657.6L897.7 652.6M895.7 658.6L899.7 653.6M893.7 654.6L895.7 652.6"/>
<path d="M867.7 670L871.7 665M869.7 671L873.7 666M867.7 667L869.7 665"/>
<path d="M854.4 684L858.4 679M856.4 685L860.4 680M854.4 681L856.4 679"/>
<path d="M893.7 683L897.7 678M895.7 684L899.7 679M893.7 680L895.7 678"/>
<path d="M801.5 558.5V566.5 M803.5 558.5V566.5 M805 558.5V566.5 M806.5 558.5V566.5 M808.5 558.5V566.5 M810 558.5V566.5 M811.5 558.5V566.5 M813.5 558.5V566.5 M815 558.5V566.5 M816.5 558.5V566.5 M818.5 558.5V566.5 M820 558.5V566.5 M821.5 558.5V566.5 M823.5 558.5V566.5 M825 558.5V566.5 M826.5 558.5V566.5 M828.5 558.5V566.5 M830 558.5V566.5 M831.5 558.5V566.5 M833.5 558.5V566.5 M835 558.5V566.5 M836.5 558.5V566.5 M838.5 558.5V566.5 M840 558.5V566.5 M841.5 558.5V566.5 M843.5 558.5V566.5 M845 558.5V566.5 M846.5 558.5V566.5 M848.5 558.5V566.5 M850 558.5V566.5 M851.5 558.5V566.5 M853.5 558.5V566.5 M855 558.5V566.5 M856.5 558.5V566.5 M858.5 558.5V566.5 M860 558.5V566.5 M861.5 558.5V566.5 M863.5 558.5V566.5 M865 558.5V566.5 M866.5 558.5V566.5 M868.5 558.5V566.5 M870 558.5V566.5 M871.5 558.5V566.5 M873.5 558.5V566.5 M875 558.5V566.5 M876.5 558.5V566.5 M878.5 558.5V566.5 M880 558.5V566.5 M881.5 558.5V566.5 M883.5 558.5V566.5 M885 558.5V566.5 M886.5 558.5V566.5 M888.5 558.5V566.5 M890 558.5V566.5 M891.5 558.5V566.5 M893.5 558.5V566.5 M895 558.5V566.5 M896.5 558.5V566.5 M898.5 558.5V566.5 M900 558.5V566.5 M901.5 558.5V566.5 M903.5 558.5V566.5 M905 558.5V566.5 M906.5 558.5V566.5 M908.5 558.5V566.5 M910 558.5V566.5 M911.5 558.5V566.5 M913.5 558.5V566.5 M915 558.5V566.5 M916.5 558.5V566.5 M918.5 558.5V566.5 M920 558.5V566.5 M921.5 558.5V566.5 M923.5 558.5V566.5 M925 558.5V566.5 M926.5 558.5V566.5 M928.5 558.5V566.5 M930 558.5V566.5 M931.5 558.5V566.5 M933.5 558.5V566.5 M935 558.5V566.5 M936.5 558.5V566.5 M938.5 558.5V566.5 M940 558.5V566.5 M941.5 558.5V566.5 M943.5 558.5V566.5 M945 558.5V566.5 M946.5 558.5V566.5 M948.5 558.5V566.5 M950 558.5V566.5 M951.5 558.5V566.5 M953.5 558.5V566.5 M955 558.5V566.5 M956.5 558.5V566.5 M958.5 558.5V566.5 M960 558.5V566.5 M961.5 558.5V566.5 M963.5 558.5V566.5 M965 558.5V566.5 M966.5 558.5V566.5 M968.5 558.5V566.5 M970 558.5V566.5 M971.5 558.5V566.5 M973.5 558.5V566.5 M975 558.5V566.5 M976.5 558.5V566.5 M978.5 558.5V566.5 M980 558.5V566.5 M981.5 558.5V566.5 M983.5 558.5V566.5 M985 558.5V566.5 M986.5 558.5V566.5 M988.5 558.5V566.5 M990 558.5V566.5 M991.5 558.5V566.5 M993.5 558.5V566.5 M995 558.5V566.5 M996.5 558.5V566.5 M998.5 558.5V566.5 M1000 558.5V566.5 M1001.5 558.5V566.5 M1003.5 558.5V566.5 M1005 558.5V566.5 M1006.5 558.5V566.5 M1008.5 558.5V566.5 M1010 558.5V566.5 M1011.5 558.5V566.5 M1013.5 558.5V566.5 M1015 558.5V566.5 M1016.5 558.5V566.5 M1018.5 558.5V566.5 M1020 558.5V566.5 M1021.5 558.5V566.5 M1023.5 558.5V566.5 M1025 558.5V566.5 M1026.5 558.5V566.5"/>
<path d="M801.5 745.5V753.5 M803.5 745.5V753.5 M805 745.5V753.5 M806.5 745.5V753.5 M808.5 745.5V753.5 M810 745.5V753.5 M811.5 745.5V753.5 M813.5 745.5V753.5 M815 745.5V753.5 M816.5 745.5V753.5 M818.5 745.5V753.5 M820 745.5V753.5 M821.5 745.5V753.5 M823.5 745.5V753.5 M825 745.5V753.5 M826.5 745.5V753.5 M828.5 745.5V753.5 M830 745.5V753.5 M831.5 745.5V753.5 M833.5 745.5V753.5 M835 745.5V753.5 M836.5 745.5V753.5 M838.5 745.5V753.5 M840 745.5V753.5 M841.5 745.5V753.5 M843.5 745.5V753.5 M845 745.5V753.5 M846.5 745.5V753.5 M848.5 745.5V753.5 M850 745.5V753.5 M851.5 745.5V753.5 M853.5 745.5V753.5 M855 745.5V753.5 M856.5 745.5V753.5 M858.5 745.5V753.5 M860 745.5V753.5 M861.5 745.5V753.5 M863.5 745.5V753.5 M865 745.5V753.5 M866.5 745.5V753.5 M868.5 745.5V753.5 M870 745.5V753.5 M871.5 745.5V753.5 M873.5 745.5V753.5 M875 745.5V753.5 M876.5 745.5V753.5 M878.5 745.5V753.5 M880 745.5V753.5 M881.5 745.5V753.5 M883.5 745.5V753.5 M885 745.5V753.5 M886.5 745.5V753.5 M888.5 745.5V753.5 M890 745.5V753.5 M891.5 745.5V753.5 M893.5 745.5V753.5 M895 745.5V753.5 M896.5 745.5V753.5 M898.5 745.5V753.5 M900 745.5V753.5 M901.5 745.5V753.5 M903.5 745.5V753.5 M905 745.5V753.5 M906.5 745.5V753.5 M908.5 745.5V753.5 M910 745.5V753.5 M911.5 745.5V753.5 M913.5 745.5V753.5 M915 745.5V753.5 M916.5 745.5V753.5 M918.5 745.5V753.5 M920 745.5V753.5 M921.5 745.5V753.5 M923.5 745.5V753.5 M925 745.5V753.5 M926.5 745.5V753.5 M928.5 745.5V753.5 M930 745.5V753.5 M931.5 745.5V753.5 M933.5 745.5V753.5 M935 745.5V753.5 M936.5 745.5V753.5 M938.5 745.5V753.5 M940 745.5V753.5 M941.5 745.5V753.5 M943.5 745.5V753.5 M945 745.5V753.5 M946.5 745.5V753.5 M948.5 745.5V753.5 M950 745.5V753.5 M951.5 745.5V753.5 M953.5 745.5V753.5 M955 745.5V753.5 M956.5 745.5V753.5 M958.5 745.5V753.5 M960 745.5V753.5 M961.5 745.5V753.5 M963.5 745.5V753.5 M965 745.5V753.5 M966.5 745.5V753.5 M968.5 745.5V753.5 M970 745.5V753.5 M971.5 745.5V753.5 M973.5 745.5V753.5 M975 745.5V753.5 M976.5 745.5V753.5 M978.5 745.5V753.5 M980 745.5V753.5 M981.5 745.5V753.5 M983.5 745.5V753.5 M985 745.5V753.5 M986.5 745.5V753.5 M988.5 745.5V753.5 M990 745.5V753.5 M991.5 745.5V753.5 M993.5 745.5V753.5 M995 745.5V753.5 M996.5 745.5V753.5 M998.5 745.5V753.5 M1000 745.5V753.5 M1001.5 745.5V753.5 M1003.5 745.5V753.5 M1005 745.5V753.5 M1006.5 745.5V753.5 M1008.5 745.5V753.5 M1010 745.5V753.5 M1011.5 745.5V753.5 M1013.5 745.5V753.5 M1015 745.5V753.5 M1016.5 745.5V753.5 M1018.5 745.5V753.5 M1020 745.5V753.5 M1021.5 745.5V753.5 M1023.5 745.5V753.5 M1025 745.5V753.5 M1026.5 745.5V753.5"/>
<rect x="1014" y="633.5" width="19.5" height="43.5"/>
<circle cx="1027" cy="655.5" r="3"/>
<rect x="1052.5" y="636" width="22.5" height="39"/>
<rect x="1045.500" y="645.500" width="19" height="20" rx="3"/>
<circle cx="1055" cy="655.5" r="8.5"/>
<circle cx="1055" cy="655.5" r="5.5"/>
<circle cx="1055" cy="655.5" r="2.8"/>
<path d="M1047 662L1050 666L1056 667.500L1062 665" stroke-dasharray="1.500 1" stroke-width="2"/>
<rect x="1092" y="641.5" width="3.5" height="6.5"/>
<path d="M679 655.5 L712 655.5 M695.5 639 L695.5 672 M722 579.5 L1014 579.5 L1014 731.5 L722 731.5 L722 579.5 M781.5 579.5 L781.5 587.5 L939.5 587.5 L939.5 724 L781.5 724 L781.5 731.5 M966 579.5 L966 731.5 M958 587.5 L966 579.5 M958 723.5 L966 731.5 M817.5 614 L838 614 M821 698 L838 698 M801.5 558.5 L1098 558.5 M801.5 753.5 L1098 753.5 M798.5 579.5 L798.5 566.5 L1029.5 566.5 L1029.5 596.5 L1019 596.5 M798.5 731.5 L798.5 745.5 L1029.5 745.5 L1029.5 715 L1019 715 M1014 598.5 L1019.5 598.5 L1019.5 633.5 M1014 712.5 L1019.5 712.5 L1019.5 677 M1033.5 639 L1052.5 639 M1036.5 642.5 L1052.5 642.5 M1036.5 668 L1052.5 668 M1033.5 671.5 L1052.5 671.5 M1036.5 642.5 L1036.5 668 M1095.5 558.5 L1095.5 753.5"/>
</svg>

<div id="bottom" class="abs"></div>
<div class="abs" style="left:0;top:162px;width:1px;height:44px;background:#c8c8c8"></div>
<svg class="abs" style="left:3px;top:162px" width="18" height="14" viewBox="0 0 18 14" fill="none"><rect x="1.500" y="9.500" width="14" height="3.500" rx="1" fill="#f4f4e4" stroke="#333"/><path d="M3 11.300h11" stroke="#333" stroke-width="0.600" stroke-dasharray="1.500 1"/><path d="M11 2.500h6M14 3v5" stroke="#333" stroke-width="1.600"/><path d="M2 8V5.500q0-2 2-2h3" stroke="#222" stroke-width="1.100"/><path d="M9 3.500l-3-2.300v4.600z" fill="#222"/></svg>
<div class="abs" style="left:4px;top:181px;width:16px;height:26px;font-size:12px;line-height:16px;color:#222;writing-mode:vertical-rl;text-orientation:sideways;white-space:nowrap">图库</div>
<svg class="abs" style="left:25px;top:818px" width="260" height="20" viewBox="25 817 260 20" fill="none">
<path d="M28.500 822v9" stroke="#777"/><path d="M35 822l-5 4.500 5 4.500z" fill="#777"/>
<path d="M50 822l-5 4.500 5 4.500z" fill="#777"/>
<path d="M61 822l5 4.500-5 4.500z" fill="#777"/>
<path d="M82.500 822v9" stroke="#777"/><path d="M76 822l5 4.500-5 4.500z" fill="#777"/>
<path d="M198 817l5 17h40l9-17" fill="#e6e6e6" stroke="#9a9a9a" stroke-width="0.900"/>
<path d="M141 817l5 17h40l9-17" fill="#e6e6e6" stroke="#9a9a9a" stroke-width="0.900"/>
<path d="M91 817l8 17h31l9-17z" fill="#fff" stroke="#9a9a9a" stroke-width="0.900"/>
</svg>
<div class="abs" style="left:25px;top:835px;width:1463px;height:5px;background:#d0d0d0"></div>
<div class="abs" style="left:25px;top:866px;width:1463px;height:1px;background:#6e6e6e"></div>
<div class="abs" style="left:99px;top:815.5px;font-size:14px;font-weight:bold;color:#333;white-space:nowrap">模型</div>
<div class="abs" style="left:142px;top:819px;font-size:12.5px;color:#333;white-space:nowrap;letter-spacing:-0.35px">Layout1</div>
<div class="abs" style="left:198px;top:819px;font-size:12.5px;color:#333;white-space:nowrap;letter-spacing:-0.35px">Layout2</div>
<div class="abs" style="left:29px;top:842px;font-size:13px;color:#333;white-space:nowrap">命令行</div>
<!--BOTTOM-->
</body></html>
